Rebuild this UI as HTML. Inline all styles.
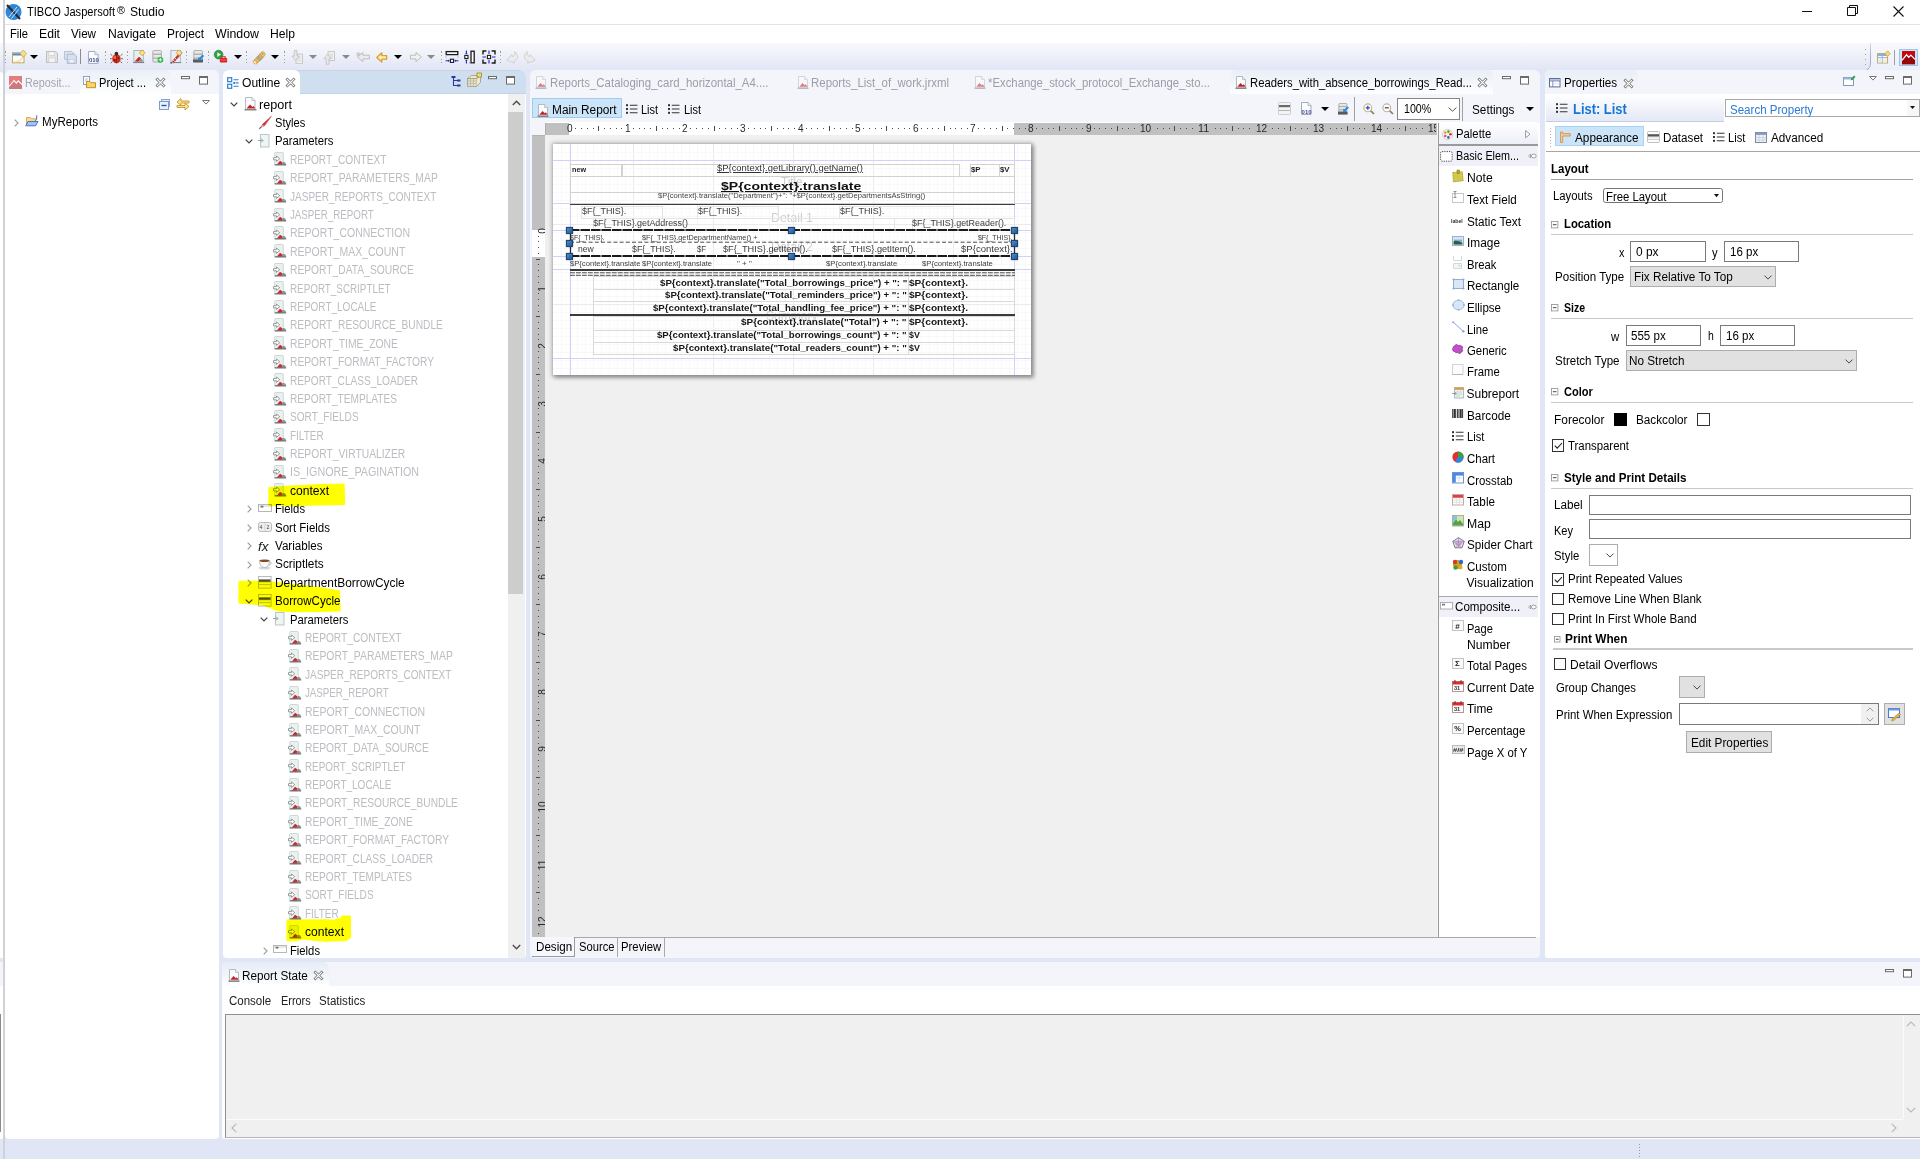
<!DOCTYPE html>
<html><head><meta charset="utf-8"><title>TIBCO Jaspersoft Studio</title><style>
html,body{margin:0;padding:0;}
body{width:1920px;height:1159px;overflow:hidden;position:relative;background:#e1e6f6;font-family:"Liberation Sans",sans-serif;font-size:12px;}
div,span.t,svg{position:absolute;}
span.t{white-space:pre;transform-origin:0 50%;}
svg{overflow:visible;}
</style></head><body>
<div style="left:0px;top:0px;width:4px;height:43px;background:#fff;"></div>
<div style="left:0px;top:43px;width:4px;height:27px;background:linear-gradient(#f8f9fd 0%,#eff1f9 45%,#e1e5f5 100%);"></div>
<div style="left:0px;top:72px;width:3px;height:1067px;background:#fff;border-radius:0 4px 2px 0;"></div>
<div style="left:5px;top:0px;width:1915px;height:24px;background:#fff;"></div>
<div style="left:5px;top:24px;width:1915px;height:1px;background:#e3e3e3;"></div>
<svg style="left:5px;top:3px;" width="18" height="18" viewBox="0 0 18 18"><circle cx="8.5" cy="9" r="8" fill="#2e86d4"/><path d="M2 2 L15 16" stroke="#2a2a3a" stroke-width="2.2"/><path d="M4 14 L12 4 M6.5 15.5 L13.5 6.5" stroke="#cfe6fa" stroke-width="1" fill="none"/></svg>
<span class="t" style="left:27px;top:4.87px;font-size:12px;line-height:14px;height:14px;color:#000;transform:scaleX(0.9228);">TIBCO Jaspersoft</span>
<span class="t" style="left:116.8px;top:4.43px;font-size:10.5px;line-height:12px;height:12px;color:#000;transform:scaleX(1.0340);">®</span>
<span class="t" style="left:129.5px;top:4.87px;font-size:12px;line-height:14px;height:14px;color:#000;transform:scaleX(1.0139);">Studio</span>
<div style="left:1802px;top:11px;width:10.2px;height:1px;background:#111;"></div>
<svg style="left:1846.5px;top:5.4px;" width="12" height="12" viewBox="0 0 12 12"><path d="M0.5 2.5 h8 v8 h-8 z M2.5 2.5 v-2 h8 v8 h-2" fill="none" stroke="#111" stroke-width="1"/></svg>
<svg style="left:1892.7px;top:5.5px;" width="12" height="12" viewBox="0 0 12 12"><path d="M0.5 0.5 L10.5 10.5 M10.5 0.5 L0.5 10.5" stroke="#111" stroke-width="1.1"/></svg>
<div style="left:5px;top:25px;width:1915px;height:18px;background:#fff;"></div>
<span class="t" style="left:10px;top:27.37px;font-size:12px;line-height:14px;height:14px;color:#000;transform:scaleX(0.9309);">File</span>
<span class="t" style="left:39px;top:27.37px;font-size:12px;line-height:14px;height:14px;color:#000;transform:scaleX(1.0156);">Edit</span>
<span class="t" style="left:71px;top:27.37px;font-size:12px;line-height:14px;height:14px;color:#000;transform:scaleX(0.9692);">View</span>
<span class="t" style="left:108px;top:27.37px;font-size:12px;line-height:14px;height:14px;color:#000;transform:scaleX(1.0134);">Navigate</span>
<span class="t" style="left:167px;top:27.37px;font-size:12px;line-height:14px;height:14px;color:#000;transform:scaleX(0.9907);">Project</span>
<span class="t" style="left:215px;top:27.37px;font-size:12px;line-height:14px;height:14px;color:#000;transform:scaleX(1.0309);">Window</span>
<span class="t" style="left:270px;top:27.37px;font-size:12px;line-height:14px;height:14px;color:#000;transform:scaleX(1.0129);">Help</span>
<div style="left:5px;top:43px;width:1915px;height:27px;background:linear-gradient(#f8f9fd 0%,#eff1f9 45%,#e1e5f5 100%);"></div>
<div style="left:5px;top:51.3px;width:1.3px;height:1.3px;background:#a59f88;"></div>
<div style="left:5px;top:54.9px;width:1.3px;height:1.3px;background:#a59f88;"></div>
<div style="left:5px;top:58.5px;width:1.3px;height:1.3px;background:#a59f88;"></div>
<div style="left:5px;top:62.099999999999994px;width:1.3px;height:1.3px;background:#a59f88;"></div>
<svg style="left:11.00px;top:49.40px;" width="16.00" height="16.00" viewBox="0 0 16 16"><rect x="1.5" y="3.8" width="11.5" height="10" fill="#fffdf4" stroke="#c2a55c"/><rect x="2" y="4.3" width="10.5" height="2.2" fill="#4a90d8"/><path d="M3 13 c5 0 8 -2 9 -6" fill="none" stroke="#f0dca0" stroke-width="1.2"/><path d="M12.3 1 L15.6 4.6 12.3 8.2 9 4.6z" fill="#f8e08a" stroke="#c8a030" stroke-width=".7"/></svg>
<svg style="left:30px;top:55px;" width="8" height="4" viewBox="0 0 8 4"><path d="M0 0 h8 l-4 4 z" fill="#000"/></svg>
<svg style="left:45.52px;top:50.92px;" width="11.96" height="11.96" viewBox="0 0 13 13"><path d="M.5 .5 h10 l2 2 v10 h-12z" fill="#e4e4e4" stroke="#b9b9b9"/><rect x="3" y="1" width="6.5" height="4" fill="#f8f8f8" stroke="#c3c3c3" stroke-width=".6"/><rect x="3" y="7.5" width="7" height="5" fill="#f2f2f2" stroke="#c3c3c3" stroke-width=".6"/></svg>
<svg style="left:63.56px;top:50.96px;" width="12.88" height="12.88" viewBox="0 0 14 14"><path d="M.5 .5 h8 l1.5 1.5 v7 h-9.5z" fill="#dfe3ec" stroke="#b3bccd"/><path d="M3.5 3.5 h8 l2 2 v8 h-10z" fill="#d8dfee" stroke="#a9b6d0"/><rect x="5.5" y="9" width="5.5" height="4" fill="#f2f4f8" stroke="#b3bccd" stroke-width=".6"/></svg>
<div style="left:80px;top:49px;width:1px;height:15px;background:#8c8c8c;"></div>
<svg style="left:88.48px;top:50.96px;" width="11.04" height="12.88" viewBox="0 0 12 14"><path d="M.5 .5 h7 l3.5 3.5 v9.5 h-10.5z" fill="#fdfdfd" stroke="#9aa3b5"/><path d="M7.5 .5 v3.5 h3.5" fill="#e8ecf5" stroke="#9aa3b5" stroke-width=".8"/><text x="1" y="12" font-size="6.5" font-weight="bold" fill="#3a4f9a" font-family="Liberation Sans">010</text></svg>
<div style="left:105px;top:51.3px;width:1.3px;height:1.3px;background:#a59f88;"></div>
<div style="left:105px;top:54.9px;width:1.3px;height:1.3px;background:#a59f88;"></div>
<div style="left:105px;top:58.5px;width:1.3px;height:1.3px;background:#a59f88;"></div>
<div style="left:105px;top:62.099999999999994px;width:1.3px;height:1.3px;background:#a59f88;"></div>
<svg style="left:109.56px;top:50.04px;" width="12.88" height="14.72" viewBox="0 0 14 16"><ellipse cx="7" cy="9.5" rx="4.6" ry="5" fill="#d82a1a"/><ellipse cx="5.6" cy="8" rx="1.6" ry="2" fill="#f47a60" opacity=".8"/><circle cx="7" cy="4" r="2" fill="#3a2a2a"/><path d="M7 5 v9.5" stroke="#5a1a10" stroke-width=".7"/><path d="M2.4 6 L.5 4.5 M2 9.5 H0 M2.6 12.5 L.8 14.2 M11.6 6 l1.9 -1.5 M12 9.5 h2 M11.4 12.5 l1.8 1.7" stroke="#3a2a2a" stroke-width=".8"/><circle cx="5" cy="11" r=".9" fill="#3a1a1a"/><circle cx="9.2" cy="9" r=".9" fill="#3a1a1a"/></svg>
<div style="left:127px;top:51.3px;width:1.3px;height:1.3px;background:#a59f88;"></div>
<div style="left:127px;top:54.9px;width:1.3px;height:1.3px;background:#a59f88;"></div>
<div style="left:127px;top:58.5px;width:1.3px;height:1.3px;background:#a59f88;"></div>
<div style="left:127px;top:62.099999999999994px;width:1.3px;height:1.3px;background:#a59f88;"></div>
<svg style="left:133.00px;top:50.40px;" width="14.00" height="14.00" viewBox="0 0 14 14"><rect x=".9" y=".5" width="9.4" height="12" fill="#e9eff0" stroke="#a4b4b6" stroke-width=".9"/><path d="M1.6 11.6 L6 6.8 8.2 8.4 5.4 11.8z" fill="#c8262c"/><path d="M8.2 8.4 l2.2 3.4 h-5z" fill="#8c8c8c"/><path d="M.2 12.6 h11" stroke="#7a8080" stroke-width="1"/><path d="M9.2 -.2 L12.2 2.8 9.2 5.8 6.2 2.8z" fill="#f4d878" stroke="#c8a030" stroke-width=".7"/><path d="M8 2.8 h2.4" stroke="#fff6c8" stroke-width=".8"/></svg>
<svg style="left:151.50px;top:50.40px;" width="14.00" height="14.00" viewBox="0 0 14 14"><rect x=".8" y=".5" width="8.6" height="11.6" rx="1" fill="#dcdcdc" stroke="#a2a2a2" stroke-width=".8"/><path d="M1 4.3 h8.2 M1 8.2 h8.2" stroke="#9a9a9a" stroke-width=".8"/><path d="M1.6 2 h7 M1.6 5.9 h7 M1.6 9.8 h7" stroke="#f2f2f2" stroke-width="1"/><circle cx="8.4" cy="9.8" r="2.9" fill="#2fb344"/><path d="M6.6 9.8 h3.6 M8.4 8 v3.6" stroke="#d8ffd8" stroke-width="1.1"/></svg>
<svg style="left:169.50px;top:50.40px;" width="14.00" height="14.00" viewBox="0 0 14 14"><rect x=".9" y=".5" width="9.4" height="12" fill="#e9eff0" stroke="#a4b4b6" stroke-width=".9"/><path d="M.2 12.6 h11" stroke="#7a8080" stroke-width="1"/><path d="M2.2 11.4 L10.6 1.6 l1.5 1.3 L3.8 12.6 1.6 13z" fill="#d03030" stroke="#9a2020" stroke-width=".4"/><path d="M3.2 10.2 l1.5 1.3 M5 8.2 l1.5 1.3" stroke="#fff" stroke-width=".8"/><path d="M1.6 13 l.7 -1.7 1.4 1.2z" fill="#e8b070"/><path d="M.6 13.4 l1.2 -.5" stroke="#2a4ad0" stroke-width="1"/><path d="M9.2 -.2 L12.2 2.8 9.2 5.8 6.2 2.8z" fill="#f4d878" stroke="#c8a030" stroke-width=".7"/><path d="M8 2.8 h2.4" stroke="#fff6c8" stroke-width=".8"/></svg>
<div style="left:186px;top:51.3px;width:1.3px;height:1.3px;background:#a59f88;"></div>
<div style="left:186px;top:54.9px;width:1.3px;height:1.3px;background:#a59f88;"></div>
<div style="left:186px;top:58.5px;width:1.3px;height:1.3px;background:#a59f88;"></div>
<div style="left:186px;top:62.099999999999994px;width:1.3px;height:1.3px;background:#a59f88;"></div>
<svg style="left:192.80px;top:50.40px;" width="14.00" height="14.00" viewBox="0 0 14 14"><rect x=".8" y=".5" width="8.6" height="11.6" rx="1" fill="#dcdcdc" stroke="#a2a2a2" stroke-width=".8"/><path d="M1 4.3 h8.2 M1 8.2 h8.2" stroke="#9a9a9a" stroke-width=".8"/><path d="M1.6 2 h7 M1.6 5.9 h7 M1.6 9.8 h7" stroke="#f2f2f2" stroke-width="1"/><rect x="0" y="9.4" width="10" height="3" fill="#5a5a5a"/><path d="M10.4 5.2 L6.4 9.2" stroke="#2a8ae0" stroke-width="2.2"/><path d="M5.2 6.8 v3.6 h3.6z" fill="#2a8ae0"/></svg>
<div style="left:208px;top:51.3px;width:1.3px;height:1.3px;background:#a59f88;"></div>
<div style="left:208px;top:54.9px;width:1.3px;height:1.3px;background:#a59f88;"></div>
<div style="left:208px;top:58.5px;width:1.3px;height:1.3px;background:#a59f88;"></div>
<div style="left:208px;top:62.099999999999994px;width:1.3px;height:1.3px;background:#a59f88;"></div>
<svg style="left:214.00px;top:50.40px;" width="14.00" height="13.00" viewBox="0 0 14 13"><circle cx="4.6" cy="4.6" r="4.4" fill="#2f9f48" stroke="#1f7f34" stroke-width=".6"/><path d="M3.3 2.2 L7 4.6 3.3 7z" fill="#eaffea"/><rect x="5.8" y="8" width="7.4" height="4.4" rx="1" fill="#d8241c"/><path d="M7.8 8 v-1.2 h3.4 v1.2" fill="none" stroke="#d8241c" stroke-width="1.1"/><path d="M6.2 10 h6.6" stroke="#f08a84" stroke-width=".7"/></svg>
<svg style="left:234px;top:55px;" width="8" height="4" viewBox="0 0 8 4"><path d="M0 0 h8 l-4 4 z" fill="#000"/></svg>
<div style="left:246px;top:51.3px;width:1.3px;height:1.3px;background:#a59f88;"></div>
<div style="left:246px;top:54.9px;width:1.3px;height:1.3px;background:#a59f88;"></div>
<div style="left:246px;top:58.5px;width:1.3px;height:1.3px;background:#a59f88;"></div>
<div style="left:246px;top:62.099999999999994px;width:1.3px;height:1.3px;background:#a59f88;"></div>
<svg style="left:251.50px;top:50.90px;" width="14.00" height="13.00" viewBox="0 0 14 13"><path d="M1.2 10.2 L7.6 3.2 l3.6 3.2 L4.6 12.8 c-1.6 .6 -3.8 -1 -3.4 -2.6z" fill="#e9b448" stroke="#b8832a" stroke-width=".6"/><path d="M7.6 3.2 l2.2 -2.4 c1.6 -.6 3.8 1.2 3.4 3 l-2 2.6z" fill="#f2c868" stroke="#b8832a" stroke-width=".6"/><path d="M4.6 6.4 l3.6 3.2 1.6 -1.6 -3.6 -3.2z" fill="#a9a9b4" stroke="#8a8a94" stroke-width=".4"/><path d="M1.4 10.6 c.4 1.4 1.6 2.2 3 2.2 l-1.2 -2.6z" fill="#fff8d8"/><circle cx="10.6" cy="3" r=".9" fill="#7aa0c8"/></svg>
<svg style="left:271px;top:55px;" width="8" height="4" viewBox="0 0 8 4"><path d="M0 0 h8 l-4 4 z" fill="#000"/></svg>
<div style="left:284px;top:51.3px;width:1.3px;height:1.3px;background:#a59f88;"></div>
<div style="left:284px;top:54.9px;width:1.3px;height:1.3px;background:#a59f88;"></div>
<div style="left:284px;top:58.5px;width:1.3px;height:1.3px;background:#a59f88;"></div>
<div style="left:284px;top:62.099999999999994px;width:1.3px;height:1.3px;background:#a59f88;"></div>
<svg style="left:290.56px;top:50.04px;" width="12.88" height="14.72" viewBox="0 0 14 16"><rect x="5.5" y="4.5" width="7" height="10" fill="#f1f1f1" stroke="#c4c4c4"/><path d="M7 7.5 h4 M7 9.5 h4 M7 11.5 h4" stroke="#cfcfcf" stroke-width=".8"/><path d="M3.5 .5 h3 v6 h2.5 l-4 5 -4 -5 h2.5z" fill="#e9e9e9" stroke="#b9b9b9" stroke-width=".8"/></svg>
<svg style="left:309px;top:55px;" width="8" height="4" viewBox="0 0 8 4"><path d="M0 0 h8 l-4 4 z" fill="#8a8a8a"/></svg>
<svg style="left:322.56px;top:50.04px;" width="12.88" height="14.72" viewBox="0 0 14 16"><rect x="5.5" y="1.5" width="7" height="10" fill="#f1f1f1" stroke="#c4c4c4"/><path d="M7 4.5 h4 M7 6.5 h4 M7 8.5 h4" stroke="#cfcfcf" stroke-width=".8"/><path d="M3.5 15.5 h3 v-6 h2.5 l-4 -5 -4 5 h2.5z" fill="#e9e9e9" stroke="#b9b9b9" stroke-width=".8"/></svg>
<svg style="left:342px;top:55px;" width="8" height="4" viewBox="0 0 8 4"><path d="M0 0 h8 l-4 4 z" fill="#8a8a8a"/></svg>
<svg style="left:355.60px;top:51.88px;" width="13.80" height="11.04" viewBox="0 0 15 12"><path d="M14.5 3.5 h-7 v-3 l-6 5 6 5 v-3 h7z" fill="#ececec" stroke="#b5b5b5" stroke-width=".9"/><path d="M2.5 0 l.7 1.5 1.6 .2 -1.2 1.1 .3 1.6 -1.4 -.8 -1.4 .8 .3 -1.6 -1.2 -1.1 1.6 -.2z" fill="#d4d4d4" stroke="#aaa" stroke-width=".4"/></svg>
<svg style="left:376.00px;top:51.70px;" width="12.00" height="11.00" viewBox="0 0 12 11"><path d="M10.6 3.6 h-4.8 v-2.8 l-5 4.6 5 4.6 v-2.8 h4.8z" fill="#fdeebc" stroke="#d9a030" stroke-width="1.3" stroke-linejoin="round"/></svg>
<svg style="left:394px;top:55px;" width="8" height="4" viewBox="0 0 8 4"><path d="M0 0 h8 l-4 4 z" fill="#000"/></svg>
<svg style="left:409.52px;top:51.88px;" width="11.96" height="11.04" viewBox="0 0 13 12"><path d="M.5 3.5 h6 v-3 l6 5 -6 5 v-3 h-6z" fill="#f1f1f1" stroke="#b9b9b9" stroke-width="1"/></svg>
<svg style="left:427px;top:55px;" width="8" height="4" viewBox="0 0 8 4"><path d="M0 0 h8 l-4 4 z" fill="#8a8a8a"/></svg>
<div style="left:441px;top:51.3px;width:1.3px;height:1.3px;background:#a59f88;"></div>
<div style="left:441px;top:54.9px;width:1.3px;height:1.3px;background:#a59f88;"></div>
<div style="left:441px;top:58.5px;width:1.3px;height:1.3px;background:#a59f88;"></div>
<div style="left:441px;top:62.099999999999994px;width:1.3px;height:1.3px;background:#a59f88;"></div>
<svg style="left:445.00px;top:50.40px;" width="14.00" height="14.00" viewBox="0 0 14 14"><rect x="1.2" y="1.6" width="11.6" height="3" fill="#fff" stroke="#1a1a1a" stroke-width="1.3"/><path d="M1 6.4 v2.2 M13 6.4 v2.2" stroke="#888" stroke-width=".8" stroke-dasharray="1 1"/><path d="M.6 10.8 h3.4 M10 10.8 h3.4" stroke="#1a2ac8" stroke-width="1.1"/><path d="M3.2 9.6 l1.6 1.2 -1.6 1.2z M10.8 9.6 l-1.6 1.2 1.6 1.2z" fill="#1a2ac8"/><rect x="5.4" y="9.2" width="3.2" height="3.2" fill="#fff" stroke="#1a1a1a" stroke-width="1.1"/></svg>
<svg style="left:464.00px;top:50.40px;" width="12.00" height="14.00" viewBox="0 0 12 14"><rect x="7" y="1.2" width="3.2" height="11.6" fill="#fff" stroke="#1a1a1a" stroke-width="1.3"/><path d="M2.4 .6 v3.2 M2.4 10.2 v3.2" stroke="#1a2ac8" stroke-width="1.1"/><path d="M1.2 3 l1.2 1.6 1.2 -1.6z M1.2 11 l1.2 -1.6 1.2 1.6z" fill="#1a2ac8"/><rect x=".8" y="5.4" width="3.2" height="3.2" fill="#fff" stroke="#1a1a1a" stroke-width="1.1"/><path d="M5 12.8 h2" stroke="#888" stroke-width=".8"/></svg>
<svg style="left:482.00px;top:50.40px;" width="14.00" height="14.00" viewBox="0 0 14 14"><path d="M1 4.4 V1 H4.4 M9.6 1 H13 V4.4 M13 9.6 V13 H9.6 M4.4 13 H1 V9.6" fill="none" stroke="#1a1a1a" stroke-width="1.4"/><path d="M7 .4 v3.6 M7 10 v3.6 M.4 7 h3.6 M10 7 h3.6" stroke="#1a2ac8" stroke-width="1.1"/><rect x="5.4" y="5.4" width="3.2" height="3.2" fill="#fff" stroke="#1a1a1a" stroke-width="1.1"/></svg>
<div style="left:500px;top:51.3px;width:1.3px;height:1.3px;background:#a59f88;"></div>
<div style="left:500px;top:54.9px;width:1.3px;height:1.3px;background:#a59f88;"></div>
<div style="left:500px;top:58.5px;width:1.3px;height:1.3px;background:#a59f88;"></div>
<div style="left:500px;top:62.099999999999994px;width:1.3px;height:1.3px;background:#a59f88;"></div>
<svg style="left:505.50px;top:50.90px;" width="13.00" height="12.50" viewBox="0 0 13 12.5"><path d="M8.6 .6 c4.2 2.4 4.2 8.2 -.8 9.6 l.6 2 -7.6 -3 5 -5.6 .6 2.2 c2.4 -.8 3 -3.4 2.2 -5.2z" fill="#ececec" stroke="#c9c9c9" stroke-width=".8"/></svg>
<svg style="left:522.50px;top:50.90px;" width="13.00" height="12.50" viewBox="0 0 13 12.5"><path d="M4.4 .6 c-4.2 2.4 -4.2 8.2 .8 9.6 l-.6 2 7.6 -3 -5 -5.6 -.6 2.2 c-2.4 -.8 -3 -3.4 -2.2 -5.2z" fill="#ececec" stroke="#c9c9c9" stroke-width=".8"/></svg>
<svg style="left:1864px;top:43px" width="56" height="27" viewBox="0 0 56 27"><defs><linearGradient id="pg" x1="0" y1="0" x2="0" y2="1"><stop offset="0" stop-color="#f8f9fd"/><stop offset="1" stop-color="#eceff9"/></linearGradient><linearGradient id="pl" x1="0" y1="0" x2="0" y2="1"><stop offset="0" stop-color="#d5d9e8"/><stop offset=".5" stop-color="#a9b0c8"/><stop offset="1" stop-color="#a0a8c2"/></linearGradient></defs><path d="M6.5 0 V20 C6.5 24 5 26 2.5 27 H56 V0z" fill="url(#pg)"/><path d="M6.5 0 V20 C6.5 24 5 26 2.5 27" fill="none" stroke="url(#pl)" stroke-width="1"/></svg>
<div style="left:1865.2px;top:49px;width:1.3px;height:1.3px;background:#a59f88;"></div>
<div style="left:1865.2px;top:54px;width:1.3px;height:1.3px;background:#a59f88;"></div>
<div style="left:1865.2px;top:59px;width:1.3px;height:1.3px;background:#a59f88;"></div>
<div style="left:1865.2px;top:64px;width:1.3px;height:1.3px;background:#a59f88;"></div>
<svg style="left:1876.50px;top:51.40px;" width="14.00" height="13.00" viewBox="0 0 14 13"><rect x=".6" y="2.6" width="10" height="9.4" fill="#fff" stroke="#b0a070" stroke-width=".9"/><path d="M.6 6.6 h10 M5.2 2.6 v9.4" stroke="#9aa6b8" stroke-width=".9"/><rect x="1" y="3" width="9.2" height="2" fill="#8ab0e0"/><rect x="1.4" y="7.4" width="3.2" height="4" fill="#dfe9f8"/><rect x="6" y="7.4" width="4" height="4" fill="#f8f0d0"/><path d="M10.6 -.2 L13.4 2.6 10.6 5.4 7.8 2.6z" fill="#f4d878" stroke="#c8a030" stroke-width=".7"/></svg>
<div style="left:1894px;top:50px;width:1px;height:15px;background:#a0a0a0;"></div>
<div style="left:1899px;top:48.6px;width:19px;height:17.4px;background:#cce4f7;border:1px solid #9ac6ea;box-sizing:border-box;"></div>
<svg style="left:1902.30px;top:51.20px;" width="13.00" height="13.20" viewBox="0 0 13 13.2"><rect width="13" height="13.2" fill="#c40a10"/><path d="M0 9.4 L4.6 3.8 6.8 6.4 8.8 4.2 13 8.4 V13.2 H0z" fill="#98060a"/><path d="M0 9.4 L4.6 3.8 6.8 6.4 8.8 4.2 13 8.4" fill="none" stroke="#fff" stroke-width="1.2"/></svg>
<div style="left:5px;top:70px;width:214px;height:1069px;background:#fff;border-radius:6px 6px 4px 4px;"></div>
<div style="left:5px;top:70px;width:214px;height:24px;background:#f4f5fb;border-radius:6px 6px 0 0;"></div>
<svg style="left:9px;top:76px;" width="13" height="13" viewBox="0 0 13 13"><rect width="13" height="13" fill="#e27c7e"/><path d="M0 10.5 L5 4.5 7.3 7.2 9.3 4.8 13 8.6 V13 H0z" fill="#cb7a7c"/><path d="M0 10.5 L5 4.5 7.3 7.2 9.3 4.8 13 8.6" fill="none" stroke="#fff" stroke-width="1.1"/></svg>
<span class="t" style="left:25px;top:76.17px;font-size:12px;line-height:14px;height:14px;color:#a4a6b4;transform:scaleX(0.8976);">Reposit...</span>
<div style="left:80px;top:70px;width:91px;height:24px;background:linear-gradient(#eaf0f7 0%,#f4f7fb 55%,#ffffff 100%);border-radius:5px 5px 0 0;"></div>
<svg style="left:83px;top:76px;" width="13" height="12" viewBox="0 0 13 12"><rect x=".5" y=".5" width="6" height="8" fill="#fff" stroke="#8d97a8" stroke-width=".9"/><path d="M2 3 h3 M2 5 h3" stroke="#9ab" stroke-width=".7"/><path d="M3.5 5.5 h3.5 l1 1.2 h4.5 v5 h-9z" fill="#f8d56a" stroke="#b98a1c" stroke-width=".9"/></svg>
<span class="t" style="left:99px;top:76.17px;font-size:12px;line-height:14px;height:14px;color:#000;transform:scaleX(0.9273);">Project ...</span>
<svg style="left:155.5px;top:78px;" width="9" height="9" viewBox="0 0 9 9"><path d="M1.4 1.4 L7.6 7.6 M7.6 1.4 L1.4 7.6" stroke="#6f6f6f" stroke-width="2.7" stroke-linecap="square"/><path d="M1.4 1.4 L7.6 7.6 M7.6 1.4 L1.4 7.6" stroke="#fff" stroke-width="1.1" stroke-linecap="square"/></svg>
<svg style="left:181px;top:76.2px;" width="9" height="3.2" viewBox="0 0 9 3.2"><rect x=".5" y=".5" width="8" height="2.2" fill="#fff" stroke="#6a6a6a" stroke-width="1"/></svg>
<svg style="left:199px;top:75.8px;" width="9" height="8.6" viewBox="0 0 9 8.6"><rect x=".5" y=".5" width="8" height="7.6" fill="#fff" stroke="#6a6a6a" stroke-width="1"/><rect x="0" y="0" width="9" height="2" fill="#6a6a6a"/></svg>
<svg style="left:159px;top:99px;" width="12" height="11" viewBox="0 0 12 11"><rect x="2.5" y=".5" width="8" height="7" fill="#dfe9f8" stroke="#7f9fd0" stroke-width=".9"/><rect x=".5" y="2.5" width="9" height="8" fill="#eaf1fb" stroke="#6f93cc" stroke-width=".9"/><path d="M2.5 6.5 h5" stroke="#2a56a8" stroke-width="1.4"/></svg>
<svg style="left:176px;top:98px;" width="14" height="12" viewBox="0 0 14 12"><path d="M13 3.5 h-8 v-2.5 l-4 3.5 4 3.5 v-2.5 h8z" fill="#f9e3a0" stroke="#c8941e" stroke-width=".9" transform="translate(0,-.5)"/><path d="M1 8.5 h8 v-2.5 l4 3.5 -4 3.5 v-2.5 h-8z" fill="#f9e3a0" stroke="#c8941e" stroke-width=".9" transform="translate(0,-1)"/></svg>
<svg style="left:202px;top:100px;" width="8" height="5" viewBox="0 0 8 5"><path d="M.6 .5 h6.8 l-3.4 3.6z" fill="#fff" stroke="#6a6a6a" stroke-width=".9"/></svg>
<svg style="left:14px;top:118.5px;" width="5" height="8" viewBox="0 0 5 8"><path d="M.7 .7 L4 4 .7 7.3" fill="none" stroke="#9a9a9a" stroke-width="1.1"/></svg>
<svg style="left:25px;top:115px;" width="14" height="12" viewBox="0 0 14 12"><path d="M1.5 2.5 h4 l1 1.2 h4 v6 h-9z" fill="#f7dc8c" stroke="#c8a040" stroke-width=".8"/><path d="M.8 10.8 l2.2 -4.3 h10 l-2.4 4.3z" fill="#9cc4f4" stroke="#4a62c0" stroke-width=".9"/><path d="M11.7 .3 v4.2 l-1.4 1.2" stroke="#3f69b8" stroke-width="1" fill="none"/></svg>
<span class="t" style="left:42px;top:115.17px;font-size:12px;line-height:14px;height:14px;color:#000;transform:scaleX(0.9653);">MyReports</span>
<div style="left:222.5px;top:70px;width:303.5px;height:887.5px;background:#fff;border-radius:6px 6px 4px 4px;"></div>
<div style="left:222.5px;top:70px;width:303.5px;height:24px;background:#cfdff0;border-radius:6px 6px 0 0;"></div>
<div style="left:228px;top:70px;width:292px;height:1px;background:#cdd5e2;"></div>
<div style="left:222.5px;top:93px;width:303.5px;height:1px;background:#c3d3e8;"></div>
<div style="left:222.5px;top:70px;width:77.5px;height:24px;background:#fff;border-radius:6px 6px 0 0;"></div>
<svg style="left:227px;top:77px;" width="12" height="12" viewBox="0 0 12 12"><rect x=".7" y=".7" width="4" height="4" fill="#fff" stroke="#2f7fd0" stroke-width="1.2"/><rect x=".7" y="7.3" width="4" height="4" fill="#fff" stroke="#2f7fd0" stroke-width="1.2"/><path d="M6.5 2.7 h5 M9 5.9 h2.5 M6.5 9.3 h5" stroke="#2f7fd0" stroke-width="1.1"/><rect x="6.3" y="5" width="2" height="2" fill="#2f7fd0"/></svg>
<span class="t" style="left:242px;top:75.97px;font-size:12px;line-height:14px;height:14px;color:#000;transform:scaleX(1.0073);">Outline</span>
<svg style="left:286px;top:78px;" width="9" height="9" viewBox="0 0 9 9"><path d="M1.4 1.4 L7.6 7.6 M7.6 1.4 L1.4 7.6" stroke="#6f6f6f" stroke-width="2.7" stroke-linecap="square"/><path d="M1.4 1.4 L7.6 7.6 M7.6 1.4 L1.4 7.6" stroke="#fff" stroke-width="1.1" stroke-linecap="square"/></svg>
<svg style="left:451px;top:76px;" width="10" height="12" viewBox="0 0 10 12"><path d="M2.5 .5 v9 h5 M2.5 4.5 h5" fill="none" stroke="#2a3a9a" stroke-width="1.1"/><rect x="0.5" y="0" width="4" height="2" fill="#2a3a9a"/><rect x="6" y="3.5" width="3.5" height="2" fill="#2a3a9a"/><rect x="6" y="8.5" width="3.5" height="2" fill="#2a3a9a"/></svg>
<svg style="left:467px;top:73px;" width="15" height="15" viewBox="0 0 15 15"><path d="M.5 5.5 L9.5 5.5 9.5 13.5 .5 13.5z" fill="#e4e0c8" stroke="#9a9a86" stroke-width=".8"/><path d="M.5 5.5 l4 -3 h9 l-4 3z M9.5 5.5 l4 -3 v7 l-4 4" fill="#efe9c4" stroke="#9a9a86" stroke-width=".8"/><path d="M.5 8 h9 M.5 10.5 h9 M3.5 5.5 v8 M6.5 5.5 v8" stroke="#b0b09a" stroke-width=".6"/><rect x="10" y="0" width="4.5" height="4" fill="#f4e06a" stroke="#8a7a2a" stroke-width=".7"/></svg>
<svg style="left:488px;top:76.2px;" width="9" height="3.2" viewBox="0 0 9 3.2"><rect x=".5" y=".5" width="8" height="2.2" fill="#fff" stroke="#6a6a6a" stroke-width="1"/></svg>
<svg style="left:506px;top:75.8px;" width="9" height="8.6" viewBox="0 0 9 8.6"><rect x=".5" y=".5" width="8" height="7.6" fill="#fff" stroke="#6a6a6a" stroke-width="1"/><rect x="0" y="0" width="9" height="2" fill="#6a6a6a"/></svg>
<div style="left:508px;top:94px;width:16.5px;height:863.5px;background:#f0f0f0;"></div>
<svg style="left:512px;top:100px;" width="9" height="6" viewBox="0 0 9 6"><path d="M.8 5 L4.5 1.3 8.2 5" fill="none" stroke="#505050" stroke-width="1.5"/></svg>
<svg style="left:512px;top:944px;" width="9" height="6" viewBox="0 0 9 6"><path d="M.8 1 L4.5 4.7 8.2 1" fill="none" stroke="#505050" stroke-width="1.5"/></svg>
<div style="left:508.3px;top:112.3px;width:15.2px;height:481.7px;background:#cdcdcd;"></div>
<svg style="left:229.5px;top:102.3px;" width="8" height="5" viewBox="0 0 8 5"><path d="M.7 .7 L4 4 7.3 .7" fill="none" stroke="#404040" stroke-width="1.2"/></svg>
<svg style="left:243.5px;top:97.0px;" width="13" height="14" viewBox="0 0 13 14"><path d="M1.5 .5 h6.5 l3 3 v9 h-9.5z" fill="#fbfcfd" stroke="#a9b2bd" stroke-width=".9"/><path d="M8 .5 v3 h3" fill="#e6ebf0" stroke="#a9b2bd" stroke-width=".7"/><path d="M2.5 11.5 l3.5 -4 2.5 2.5 1 -1 2 2.5z" fill="#c8202a"/><path d="M.5 12.8 h12" stroke="#7a7a7a" stroke-width="1.3"/></svg>
<span class="t" style="left:259px;top:97.67px;font-size:12px;line-height:14px;height:14px;color:#000;transform:scaleX(1.0527);">report</span>
<svg style="left:257.5px;top:115.69px;" width="14" height="14" viewBox="0 0 14 14"><path d="M13.2 .4 L4.6 8.2 3.4 10.8 6.2 10z" fill="#d03038" stroke="#a81e24" stroke-width=".5"/><path d="M13.2 .4 L6.2 10" stroke="#e8686c" stroke-width=".8"/><path d="M4.4 8.6 l1.8 1.5 -2.6 1.3z" fill="#e8b478"/><path d="M.4 13.4 l3.4 -1.7 -1.3 -1.1z" fill="#3a5ad0"/></svg>
<span class="t" style="left:274.5px;top:116.06px;font-size:12px;line-height:14px;height:14px;color:#000;transform:scaleX(0.9242);">Styles</span>
<svg style="left:244.5px;top:139.07999999999998px;" width="8" height="5" viewBox="0 0 8 5"><path d="M.7 .7 L4 4 7.3 .7" fill="none" stroke="#404040" stroke-width="1.2"/></svg>
<svg style="left:257.5px;top:133.77999999999997px;" width="12" height="14" viewBox="0 0 12 14"><rect x="2.5" y=".5" width="8.5" height="12.5" fill="#eef5f3" stroke="#b4c2c0" stroke-width=".9"/><path d="M0 6.5 h4.5 M3 4.5 l2 2 -2 2" fill="none" stroke="#8aa09c" stroke-width=".9"/></svg>
<span class="t" style="left:274.5px;top:134.45px;font-size:12px;line-height:14px;height:14px;color:#000;transform:scaleX(0.9400);">Parameters</span>
<svg style="left:272.5px;top:152.47px;" width="14" height="14" viewBox="0 0 14 14"><rect x="1.7" y=".5" width="8.6" height="12.2" rx=".8" fill="#eaf1ef" stroke="#c3cfcc" stroke-width=".8"/><path d="M.5 5.6 h3 v-1.6 l3.2 2.7 -3.2 2.7 v-1.6 h-3z" fill="#fff" stroke="#7d8886" stroke-width=".8" stroke-linejoin="round"/><path d="M3.9 12.6 L7 8.8 9.6 10.6 8.6 12.6z" fill="#cc2a30"/><path d="M9.6 10.6 c1.6 -1.2 3.2 0 3.4 2 h-4.6z" fill="#8f8f8f"/><path d="M1.6 12.9 h11.6" stroke="#555" stroke-width="1"/></svg>
<span class="t" style="left:289.7px;top:152.84px;font-size:12px;line-height:14px;height:14px;color:#bbbdc2;transform:scaleX(0.8480);">REPORT_CONTEXT</span>
<svg style="left:272.5px;top:170.86px;" width="14" height="14" viewBox="0 0 14 14"><rect x="1.7" y=".5" width="8.6" height="12.2" rx=".8" fill="#eaf1ef" stroke="#c3cfcc" stroke-width=".8"/><path d="M.5 5.6 h3 v-1.6 l3.2 2.7 -3.2 2.7 v-1.6 h-3z" fill="#fff" stroke="#7d8886" stroke-width=".8" stroke-linejoin="round"/><path d="M3.9 12.6 L7 8.8 9.6 10.6 8.6 12.6z" fill="#cc2a30"/><path d="M9.6 10.6 c1.6 -1.2 3.2 0 3.4 2 h-4.6z" fill="#8f8f8f"/><path d="M1.6 12.9 h11.6" stroke="#555" stroke-width="1"/></svg>
<span class="t" style="left:289.7px;top:171.23px;font-size:12px;line-height:14px;height:14px;color:#bbbdc2;transform:scaleX(0.8647);">REPORT_PARAMETERS_MAP</span>
<svg style="left:272.5px;top:189.25px;" width="14" height="14" viewBox="0 0 14 14"><rect x="1.7" y=".5" width="8.6" height="12.2" rx=".8" fill="#eaf1ef" stroke="#c3cfcc" stroke-width=".8"/><path d="M.5 5.6 h3 v-1.6 l3.2 2.7 -3.2 2.7 v-1.6 h-3z" fill="#fff" stroke="#7d8886" stroke-width=".8" stroke-linejoin="round"/><path d="M3.9 12.6 L7 8.8 9.6 10.6 8.6 12.6z" fill="#cc2a30"/><path d="M9.6 10.6 c1.6 -1.2 3.2 0 3.4 2 h-4.6z" fill="#8f8f8f"/><path d="M1.6 12.9 h11.6" stroke="#555" stroke-width="1"/></svg>
<span class="t" style="left:289.7px;top:189.62px;font-size:12px;line-height:14px;height:14px;color:#bbbdc2;transform:scaleX(0.8352);">JASPER_REPORTS_CONTEXT</span>
<svg style="left:272.5px;top:207.64px;" width="14" height="14" viewBox="0 0 14 14"><rect x="1.7" y=".5" width="8.6" height="12.2" rx=".8" fill="#eaf1ef" stroke="#c3cfcc" stroke-width=".8"/><path d="M.5 5.6 h3 v-1.6 l3.2 2.7 -3.2 2.7 v-1.6 h-3z" fill="#fff" stroke="#7d8886" stroke-width=".8" stroke-linejoin="round"/><path d="M3.9 12.6 L7 8.8 9.6 10.6 8.6 12.6z" fill="#cc2a30"/><path d="M9.6 10.6 c1.6 -1.2 3.2 0 3.4 2 h-4.6z" fill="#8f8f8f"/><path d="M1.6 12.9 h11.6" stroke="#555" stroke-width="1"/></svg>
<span class="t" style="left:289.7px;top:208.01px;font-size:12px;line-height:14px;height:14px;color:#bbbdc2;transform:scaleX(0.8115);">JASPER_REPORT</span>
<svg style="left:272.5px;top:226.03000000000003px;" width="14" height="14" viewBox="0 0 14 14"><rect x="1.7" y=".5" width="8.6" height="12.2" rx=".8" fill="#eaf1ef" stroke="#c3cfcc" stroke-width=".8"/><path d="M.5 5.6 h3 v-1.6 l3.2 2.7 -3.2 2.7 v-1.6 h-3z" fill="#fff" stroke="#7d8886" stroke-width=".8" stroke-linejoin="round"/><path d="M3.9 12.6 L7 8.8 9.6 10.6 8.6 12.6z" fill="#cc2a30"/><path d="M9.6 10.6 c1.6 -1.2 3.2 0 3.4 2 h-4.6z" fill="#8f8f8f"/><path d="M1.6 12.9 h11.6" stroke="#555" stroke-width="1"/></svg>
<span class="t" style="left:289.7px;top:226.40px;font-size:12px;line-height:14px;height:14px;color:#bbbdc2;transform:scaleX(0.8751);">REPORT_CONNECTION</span>
<svg style="left:272.5px;top:244.42000000000002px;" width="14" height="14" viewBox="0 0 14 14"><rect x="1.7" y=".5" width="8.6" height="12.2" rx=".8" fill="#eaf1ef" stroke="#c3cfcc" stroke-width=".8"/><path d="M.5 5.6 h3 v-1.6 l3.2 2.7 -3.2 2.7 v-1.6 h-3z" fill="#fff" stroke="#7d8886" stroke-width=".8" stroke-linejoin="round"/><path d="M3.9 12.6 L7 8.8 9.6 10.6 8.6 12.6z" fill="#cc2a30"/><path d="M9.6 10.6 c1.6 -1.2 3.2 0 3.4 2 h-4.6z" fill="#8f8f8f"/><path d="M1.6 12.9 h11.6" stroke="#555" stroke-width="1"/></svg>
<span class="t" style="left:289.7px;top:244.79px;font-size:12px;line-height:14px;height:14px;color:#bbbdc2;transform:scaleX(0.8748);">REPORT_MAX_COUNT</span>
<svg style="left:272.5px;top:262.81px;" width="14" height="14" viewBox="0 0 14 14"><rect x="1.7" y=".5" width="8.6" height="12.2" rx=".8" fill="#eaf1ef" stroke="#c3cfcc" stroke-width=".8"/><path d="M.5 5.6 h3 v-1.6 l3.2 2.7 -3.2 2.7 v-1.6 h-3z" fill="#fff" stroke="#7d8886" stroke-width=".8" stroke-linejoin="round"/><path d="M3.9 12.6 L7 8.8 9.6 10.6 8.6 12.6z" fill="#cc2a30"/><path d="M9.6 10.6 c1.6 -1.2 3.2 0 3.4 2 h-4.6z" fill="#8f8f8f"/><path d="M1.6 12.9 h11.6" stroke="#555" stroke-width="1"/></svg>
<span class="t" style="left:289.7px;top:263.18px;font-size:12px;line-height:14px;height:14px;color:#bbbdc2;transform:scaleX(0.8556);">REPORT_DATA_SOURCE</span>
<svg style="left:272.5px;top:281.2px;" width="14" height="14" viewBox="0 0 14 14"><rect x="1.7" y=".5" width="8.6" height="12.2" rx=".8" fill="#eaf1ef" stroke="#c3cfcc" stroke-width=".8"/><path d="M.5 5.6 h3 v-1.6 l3.2 2.7 -3.2 2.7 v-1.6 h-3z" fill="#fff" stroke="#7d8886" stroke-width=".8" stroke-linejoin="round"/><path d="M3.9 12.6 L7 8.8 9.6 10.6 8.6 12.6z" fill="#cc2a30"/><path d="M9.6 10.6 c1.6 -1.2 3.2 0 3.4 2 h-4.6z" fill="#8f8f8f"/><path d="M1.6 12.9 h11.6" stroke="#555" stroke-width="1"/></svg>
<span class="t" style="left:289.7px;top:281.57px;font-size:12px;line-height:14px;height:14px;color:#bbbdc2;transform:scaleX(0.8206);">REPORT_SCRIPTLET</span>
<svg style="left:272.5px;top:299.59000000000003px;" width="14" height="14" viewBox="0 0 14 14"><rect x="1.7" y=".5" width="8.6" height="12.2" rx=".8" fill="#eaf1ef" stroke="#c3cfcc" stroke-width=".8"/><path d="M.5 5.6 h3 v-1.6 l3.2 2.7 -3.2 2.7 v-1.6 h-3z" fill="#fff" stroke="#7d8886" stroke-width=".8" stroke-linejoin="round"/><path d="M3.9 12.6 L7 8.8 9.6 10.6 8.6 12.6z" fill="#cc2a30"/><path d="M9.6 10.6 c1.6 -1.2 3.2 0 3.4 2 h-4.6z" fill="#8f8f8f"/><path d="M1.6 12.9 h11.6" stroke="#555" stroke-width="1"/></svg>
<span class="t" style="left:289.7px;top:299.96px;font-size:12px;line-height:14px;height:14px;color:#bbbdc2;transform:scaleX(0.8332);">REPORT_LOCALE</span>
<svg style="left:272.5px;top:317.98px;" width="14" height="14" viewBox="0 0 14 14"><rect x="1.7" y=".5" width="8.6" height="12.2" rx=".8" fill="#eaf1ef" stroke="#c3cfcc" stroke-width=".8"/><path d="M.5 5.6 h3 v-1.6 l3.2 2.7 -3.2 2.7 v-1.6 h-3z" fill="#fff" stroke="#7d8886" stroke-width=".8" stroke-linejoin="round"/><path d="M3.9 12.6 L7 8.8 9.6 10.6 8.6 12.6z" fill="#cc2a30"/><path d="M9.6 10.6 c1.6 -1.2 3.2 0 3.4 2 h-4.6z" fill="#8f8f8f"/><path d="M1.6 12.9 h11.6" stroke="#555" stroke-width="1"/></svg>
<span class="t" style="left:289.7px;top:318.35px;font-size:12px;line-height:14px;height:14px;color:#bbbdc2;transform:scaleX(0.8503);">REPORT_RESOURCE_BUNDLE</span>
<svg style="left:272.5px;top:336.37px;" width="14" height="14" viewBox="0 0 14 14"><rect x="1.7" y=".5" width="8.6" height="12.2" rx=".8" fill="#eaf1ef" stroke="#c3cfcc" stroke-width=".8"/><path d="M.5 5.6 h3 v-1.6 l3.2 2.7 -3.2 2.7 v-1.6 h-3z" fill="#fff" stroke="#7d8886" stroke-width=".8" stroke-linejoin="round"/><path d="M3.9 12.6 L7 8.8 9.6 10.6 8.6 12.6z" fill="#cc2a30"/><path d="M9.6 10.6 c1.6 -1.2 3.2 0 3.4 2 h-4.6z" fill="#8f8f8f"/><path d="M1.6 12.9 h11.6" stroke="#555" stroke-width="1"/></svg>
<span class="t" style="left:289.7px;top:336.74px;font-size:12px;line-height:14px;height:14px;color:#bbbdc2;transform:scaleX(0.8623);">REPORT_TIME_ZONE</span>
<svg style="left:272.5px;top:354.76000000000005px;" width="14" height="14" viewBox="0 0 14 14"><rect x="1.7" y=".5" width="8.6" height="12.2" rx=".8" fill="#eaf1ef" stroke="#c3cfcc" stroke-width=".8"/><path d="M.5 5.6 h3 v-1.6 l3.2 2.7 -3.2 2.7 v-1.6 h-3z" fill="#fff" stroke="#7d8886" stroke-width=".8" stroke-linejoin="round"/><path d="M3.9 12.6 L7 8.8 9.6 10.6 8.6 12.6z" fill="#cc2a30"/><path d="M9.6 10.6 c1.6 -1.2 3.2 0 3.4 2 h-4.6z" fill="#8f8f8f"/><path d="M1.6 12.9 h11.6" stroke="#555" stroke-width="1"/></svg>
<span class="t" style="left:289.7px;top:355.13px;font-size:12px;line-height:14px;height:14px;color:#bbbdc2;transform:scaleX(0.8513);">REPORT_FORMAT_FACTORY</span>
<svg style="left:272.5px;top:373.15000000000003px;" width="14" height="14" viewBox="0 0 14 14"><rect x="1.7" y=".5" width="8.6" height="12.2" rx=".8" fill="#eaf1ef" stroke="#c3cfcc" stroke-width=".8"/><path d="M.5 5.6 h3 v-1.6 l3.2 2.7 -3.2 2.7 v-1.6 h-3z" fill="#fff" stroke="#7d8886" stroke-width=".8" stroke-linejoin="round"/><path d="M3.9 12.6 L7 8.8 9.6 10.6 8.6 12.6z" fill="#cc2a30"/><path d="M9.6 10.6 c1.6 -1.2 3.2 0 3.4 2 h-4.6z" fill="#8f8f8f"/><path d="M1.6 12.9 h11.6" stroke="#555" stroke-width="1"/></svg>
<span class="t" style="left:289.7px;top:373.52px;font-size:12px;line-height:14px;height:14px;color:#bbbdc2;transform:scaleX(0.8430);">REPORT_CLASS_LOADER</span>
<svg style="left:272.5px;top:391.54px;" width="14" height="14" viewBox="0 0 14 14"><rect x="1.7" y=".5" width="8.6" height="12.2" rx=".8" fill="#eaf1ef" stroke="#c3cfcc" stroke-width=".8"/><path d="M.5 5.6 h3 v-1.6 l3.2 2.7 -3.2 2.7 v-1.6 h-3z" fill="#fff" stroke="#7d8886" stroke-width=".8" stroke-linejoin="round"/><path d="M3.9 12.6 L7 8.8 9.6 10.6 8.6 12.6z" fill="#cc2a30"/><path d="M9.6 10.6 c1.6 -1.2 3.2 0 3.4 2 h-4.6z" fill="#8f8f8f"/><path d="M1.6 12.9 h11.6" stroke="#555" stroke-width="1"/></svg>
<span class="t" style="left:289.7px;top:391.91px;font-size:12px;line-height:14px;height:14px;color:#bbbdc2;transform:scaleX(0.8430);">REPORT_TEMPLATES</span>
<svg style="left:272.5px;top:409.93px;" width="14" height="14" viewBox="0 0 14 14"><rect x="1.7" y=".5" width="8.6" height="12.2" rx=".8" fill="#eaf1ef" stroke="#c3cfcc" stroke-width=".8"/><path d="M.5 5.6 h3 v-1.6 l3.2 2.7 -3.2 2.7 v-1.6 h-3z" fill="#fff" stroke="#7d8886" stroke-width=".8" stroke-linejoin="round"/><path d="M3.9 12.6 L7 8.8 9.6 10.6 8.6 12.6z" fill="#cc2a30"/><path d="M9.6 10.6 c1.6 -1.2 3.2 0 3.4 2 h-4.6z" fill="#8f8f8f"/><path d="M1.6 12.9 h11.6" stroke="#555" stroke-width="1"/></svg>
<span class="t" style="left:289.7px;top:410.30px;font-size:12px;line-height:14px;height:14px;color:#bbbdc2;transform:scaleX(0.8386);">SORT_FIELDS</span>
<svg style="left:272.5px;top:428.32px;" width="14" height="14" viewBox="0 0 14 14"><rect x="1.7" y=".5" width="8.6" height="12.2" rx=".8" fill="#eaf1ef" stroke="#c3cfcc" stroke-width=".8"/><path d="M.5 5.6 h3 v-1.6 l3.2 2.7 -3.2 2.7 v-1.6 h-3z" fill="#fff" stroke="#7d8886" stroke-width=".8" stroke-linejoin="round"/><path d="M3.9 12.6 L7 8.8 9.6 10.6 8.6 12.6z" fill="#cc2a30"/><path d="M9.6 10.6 c1.6 -1.2 3.2 0 3.4 2 h-4.6z" fill="#8f8f8f"/><path d="M1.6 12.9 h11.6" stroke="#555" stroke-width="1"/></svg>
<span class="t" style="left:289.7px;top:428.69px;font-size:12px;line-height:14px;height:14px;color:#bbbdc2;transform:scaleX(0.8307);">FILTER</span>
<svg style="left:272.5px;top:446.71000000000004px;" width="14" height="14" viewBox="0 0 14 14"><rect x="1.7" y=".5" width="8.6" height="12.2" rx=".8" fill="#eaf1ef" stroke="#c3cfcc" stroke-width=".8"/><path d="M.5 5.6 h3 v-1.6 l3.2 2.7 -3.2 2.7 v-1.6 h-3z" fill="#fff" stroke="#7d8886" stroke-width=".8" stroke-linejoin="round"/><path d="M3.9 12.6 L7 8.8 9.6 10.6 8.6 12.6z" fill="#cc2a30"/><path d="M9.6 10.6 c1.6 -1.2 3.2 0 3.4 2 h-4.6z" fill="#8f8f8f"/><path d="M1.6 12.9 h11.6" stroke="#555" stroke-width="1"/></svg>
<span class="t" style="left:289.7px;top:447.08px;font-size:12px;line-height:14px;height:14px;color:#bbbdc2;transform:scaleX(0.8580);">REPORT_VIRTUALIZER</span>
<svg style="left:272.5px;top:465.1px;" width="14" height="14" viewBox="0 0 14 14"><rect x="1.7" y=".5" width="8.6" height="12.2" rx=".8" fill="#eaf1ef" stroke="#c3cfcc" stroke-width=".8"/><path d="M.5 5.6 h3 v-1.6 l3.2 2.7 -3.2 2.7 v-1.6 h-3z" fill="#fff" stroke="#7d8886" stroke-width=".8" stroke-linejoin="round"/><path d="M3.9 12.6 L7 8.8 9.6 10.6 8.6 12.6z" fill="#cc2a30"/><path d="M9.6 10.6 c1.6 -1.2 3.2 0 3.4 2 h-4.6z" fill="#8f8f8f"/><path d="M1.6 12.9 h11.6" stroke="#555" stroke-width="1"/></svg>
<span class="t" style="left:289.7px;top:465.47px;font-size:12px;line-height:14px;height:14px;color:#bbbdc2;transform:scaleX(0.8942);">IS_IGNORE_PAGINATION</span>
<svg style="left:272.5px;top:483.49px;" width="14" height="14" viewBox="0 0 14 14"><rect x="1.7" y=".5" width="8.6" height="12.2" rx=".8" fill="#eaf1ef" stroke="#c3cfcc" stroke-width=".8"/><path d="M.5 5.6 h3 v-1.6 l3.2 2.7 -3.2 2.7 v-1.6 h-3z" fill="#fff" stroke="#7d8886" stroke-width=".8" stroke-linejoin="round"/><path d="M3.9 12.6 L7 8.8 9.6 10.6 8.6 12.6z" fill="#cc2a30"/><path d="M9.6 10.6 c1.6 -1.2 3.2 0 3.4 2 h-4.6z" fill="#8f8f8f"/><path d="M1.6 12.9 h11.6" stroke="#555" stroke-width="1"/></svg>
<span class="t" style="left:289.7px;top:483.86px;font-size:12px;line-height:14px;height:14px;color:#000;transform:scaleX(1.0080);">context</span>
<svg style="left:247.0px;top:505.38000000000005px;" width="5" height="8" viewBox="0 0 5 8"><path d="M.7 .7 L4 4 .7 7.3" fill="none" stroke="#9a9a9a" stroke-width="1.1"/></svg>
<svg style="left:257.5px;top:503.88000000000005px;" width="14" height="9" viewBox="0 0 14 9"><rect x=".5" y=".5" width="13" height="7" fill="#fff" stroke="#b0b0b0" stroke-width=".9"/><rect x="1" y="1" width="12" height="2" fill="#e8e8e8"/><path d="M2.5 2.5 h3 M3.3 1.6 v2.4 M4.7 1.6 v2.4" stroke="#555" stroke-width=".6"/></svg>
<span class="t" style="left:274.5px;top:502.25px;font-size:12px;line-height:14px;height:14px;color:#000;transform:scaleX(0.9372);">Fields</span>
<svg style="left:247.0px;top:523.77px;" width="5" height="8" viewBox="0 0 5 8"><path d="M.7 .7 L4 4 .7 7.3" fill="none" stroke="#9a9a9a" stroke-width="1.1"/></svg>
<svg style="left:257.5px;top:521.27px;" width="14" height="12" viewBox="0 0 14 12"><rect x=".5" y="1.5" width="13" height="9" rx="2" fill="#eee" stroke="#b5b5b5" stroke-width=".9"/><path d="M7 1.5 v9" stroke="#c9c9c9" stroke-width=".7"/><text x="1.6" y="8.3" font-size="5.2" font-family="Liberation Sans" fill="#444">4</text><text x="8.6" y="8.3" font-size="5.2" font-family="Liberation Sans" fill="#444">2</text></svg>
<span class="t" style="left:274.5px;top:520.64px;font-size:12px;line-height:14px;height:14px;color:#000;transform:scaleX(0.9590);">Sort Fields</span>
<svg style="left:247.0px;top:542.16px;" width="5" height="8" viewBox="0 0 5 8"><path d="M.7 .7 L4 4 .7 7.3" fill="none" stroke="#9a9a9a" stroke-width="1.1"/></svg>
<span class="t" style="left:258.0px;top:538.78px;font-size:13.5px;line-height:15px;height:15px;color:#1a1a1a;font-style:italic;font-family:"Liberation Serif",serif;transform:scaleX(1.1803);">fx</span>
<span class="t" style="left:274.5px;top:539.03px;font-size:12px;line-height:14px;height:14px;color:#000;transform:scaleX(0.9687);">Variables</span>
<svg style="left:247.0px;top:560.55px;" width="5" height="8" viewBox="0 0 5 8"><path d="M.7 .7 L4 4 .7 7.3" fill="none" stroke="#9a9a9a" stroke-width="1.1"/></svg>
<svg style="left:257.5px;top:558.05px;" width="14" height="12" viewBox="0 0 14 12"><ellipse cx="6.5" cy="10" rx="6" ry="1.6" fill="#d8d8d8"/><path d="M1.5 2.5 h10 c0 4 -2 7 -5 7 s-5 -3 -5 -7z" fill="#fafafa" stroke="#a8a8a8" stroke-width=".8"/><ellipse cx="6.5" cy="2.7" rx="4.8" ry="1.3" fill="#8a4a2a"/><path d="M11.3 3.5 c2.4 0 2.4 3.4 -.6 3.6" fill="none" stroke="#a8a8a8" stroke-width=".9"/></svg>
<span class="t" style="left:274.5px;top:557.42px;font-size:12px;line-height:14px;height:14px;color:#000;transform:scaleX(0.9848);">Scriptlets</span>
<svg style="left:247.0px;top:578.9399999999999px;" width="5" height="8" viewBox="0 0 5 8"><path d="M.7 .7 L4 4 .7 7.3" fill="none" stroke="#9a9a9a" stroke-width="1.1"/></svg>
<svg style="left:257.5px;top:575.9399999999999px;" width="14" height="13" viewBox="0 0 14 13"><rect x=".5" y=".5" width="12.6" height="11.6" fill="#fdfdfd" stroke="#b3b3b3" stroke-width=".9"/><rect x="1" y="3.4" width="11.6" height="2.4" fill="#4f4f4f"/><path d="M1 8.6 h11.6" stroke="#b9b9b9" stroke-width=".9"/><path d="M1 6.6 h11.6" stroke="#e4e4e4" stroke-width="1"/></svg>
<span class="t" style="left:274.5px;top:575.81px;font-size:12px;line-height:14px;height:14px;color:#000;transform:scaleX(0.9922);">DepartmentBorrowCycle</span>
<svg style="left:244.5px;top:598.83px;" width="8" height="5" viewBox="0 0 8 5"><path d="M.7 .7 L4 4 7.3 .7" fill="none" stroke="#404040" stroke-width="1.2"/></svg>
<svg style="left:257.5px;top:594.33px;" width="14" height="13" viewBox="0 0 14 13"><rect x=".5" y=".5" width="12.6" height="11.6" fill="#fdfdfd" stroke="#b3b3b3" stroke-width=".9"/><rect x="1" y="3.4" width="11.6" height="2.4" fill="#4f4f4f"/><path d="M1 8.6 h11.6" stroke="#b9b9b9" stroke-width=".9"/><path d="M1 6.6 h11.6" stroke="#e4e4e4" stroke-width="1"/></svg>
<span class="t" style="left:274.5px;top:594.20px;font-size:12px;line-height:14px;height:14px;color:#000;transform:scaleX(0.9630);">BorrowCycle</span>
<svg style="left:260px;top:617.22px;" width="8" height="5" viewBox="0 0 8 5"><path d="M.7 .7 L4 4 7.3 .7" fill="none" stroke="#404040" stroke-width="1.2"/></svg>
<svg style="left:272.5px;top:611.9200000000001px;" width="12" height="14" viewBox="0 0 12 14"><rect x="2.5" y=".5" width="8.5" height="12.5" fill="#eef5f3" stroke="#b4c2c0" stroke-width=".9"/><path d="M0 6.5 h4.5 M3 4.5 l2 2 -2 2" fill="none" stroke="#8aa09c" stroke-width=".9"/></svg>
<span class="t" style="left:289.7px;top:612.59px;font-size:12px;line-height:14px;height:14px;color:#000;transform:scaleX(0.9400);">Parameters</span>
<svg style="left:288px;top:630.61px;" width="14" height="14" viewBox="0 0 14 14"><rect x="1.7" y=".5" width="8.6" height="12.2" rx=".8" fill="#eaf1ef" stroke="#c3cfcc" stroke-width=".8"/><path d="M.5 5.6 h3 v-1.6 l3.2 2.7 -3.2 2.7 v-1.6 h-3z" fill="#fff" stroke="#7d8886" stroke-width=".8" stroke-linejoin="round"/><path d="M3.9 12.6 L7 8.8 9.6 10.6 8.6 12.6z" fill="#cc2a30"/><path d="M9.6 10.6 c1.6 -1.2 3.2 0 3.4 2 h-4.6z" fill="#8f8f8f"/><path d="M1.6 12.9 h11.6" stroke="#555" stroke-width="1"/></svg>
<span class="t" style="left:305px;top:630.98px;font-size:12px;line-height:14px;height:14px;color:#bbbdc2;transform:scaleX(0.8480);">REPORT_CONTEXT</span>
<svg style="left:288px;top:649.0px;" width="14" height="14" viewBox="0 0 14 14"><rect x="1.7" y=".5" width="8.6" height="12.2" rx=".8" fill="#eaf1ef" stroke="#c3cfcc" stroke-width=".8"/><path d="M.5 5.6 h3 v-1.6 l3.2 2.7 -3.2 2.7 v-1.6 h-3z" fill="#fff" stroke="#7d8886" stroke-width=".8" stroke-linejoin="round"/><path d="M3.9 12.6 L7 8.8 9.6 10.6 8.6 12.6z" fill="#cc2a30"/><path d="M9.6 10.6 c1.6 -1.2 3.2 0 3.4 2 h-4.6z" fill="#8f8f8f"/><path d="M1.6 12.9 h11.6" stroke="#555" stroke-width="1"/></svg>
<span class="t" style="left:305px;top:649.37px;font-size:12px;line-height:14px;height:14px;color:#bbbdc2;transform:scaleX(0.8647);">REPORT_PARAMETERS_MAP</span>
<svg style="left:288px;top:667.39px;" width="14" height="14" viewBox="0 0 14 14"><rect x="1.7" y=".5" width="8.6" height="12.2" rx=".8" fill="#eaf1ef" stroke="#c3cfcc" stroke-width=".8"/><path d="M.5 5.6 h3 v-1.6 l3.2 2.7 -3.2 2.7 v-1.6 h-3z" fill="#fff" stroke="#7d8886" stroke-width=".8" stroke-linejoin="round"/><path d="M3.9 12.6 L7 8.8 9.6 10.6 8.6 12.6z" fill="#cc2a30"/><path d="M9.6 10.6 c1.6 -1.2 3.2 0 3.4 2 h-4.6z" fill="#8f8f8f"/><path d="M1.6 12.9 h11.6" stroke="#555" stroke-width="1"/></svg>
<span class="t" style="left:305px;top:667.76px;font-size:12px;line-height:14px;height:14px;color:#bbbdc2;transform:scaleX(0.8352);">JASPER_REPORTS_CONTEXT</span>
<svg style="left:288px;top:685.78px;" width="14" height="14" viewBox="0 0 14 14"><rect x="1.7" y=".5" width="8.6" height="12.2" rx=".8" fill="#eaf1ef" stroke="#c3cfcc" stroke-width=".8"/><path d="M.5 5.6 h3 v-1.6 l3.2 2.7 -3.2 2.7 v-1.6 h-3z" fill="#fff" stroke="#7d8886" stroke-width=".8" stroke-linejoin="round"/><path d="M3.9 12.6 L7 8.8 9.6 10.6 8.6 12.6z" fill="#cc2a30"/><path d="M9.6 10.6 c1.6 -1.2 3.2 0 3.4 2 h-4.6z" fill="#8f8f8f"/><path d="M1.6 12.9 h11.6" stroke="#555" stroke-width="1"/></svg>
<span class="t" style="left:305px;top:686.15px;font-size:12px;line-height:14px;height:14px;color:#bbbdc2;transform:scaleX(0.8115);">JASPER_REPORT</span>
<svg style="left:288px;top:704.17px;" width="14" height="14" viewBox="0 0 14 14"><rect x="1.7" y=".5" width="8.6" height="12.2" rx=".8" fill="#eaf1ef" stroke="#c3cfcc" stroke-width=".8"/><path d="M.5 5.6 h3 v-1.6 l3.2 2.7 -3.2 2.7 v-1.6 h-3z" fill="#fff" stroke="#7d8886" stroke-width=".8" stroke-linejoin="round"/><path d="M3.9 12.6 L7 8.8 9.6 10.6 8.6 12.6z" fill="#cc2a30"/><path d="M9.6 10.6 c1.6 -1.2 3.2 0 3.4 2 h-4.6z" fill="#8f8f8f"/><path d="M1.6 12.9 h11.6" stroke="#555" stroke-width="1"/></svg>
<span class="t" style="left:305px;top:704.54px;font-size:12px;line-height:14px;height:14px;color:#bbbdc2;transform:scaleX(0.8751);">REPORT_CONNECTION</span>
<svg style="left:288px;top:722.56px;" width="14" height="14" viewBox="0 0 14 14"><rect x="1.7" y=".5" width="8.6" height="12.2" rx=".8" fill="#eaf1ef" stroke="#c3cfcc" stroke-width=".8"/><path d="M.5 5.6 h3 v-1.6 l3.2 2.7 -3.2 2.7 v-1.6 h-3z" fill="#fff" stroke="#7d8886" stroke-width=".8" stroke-linejoin="round"/><path d="M3.9 12.6 L7 8.8 9.6 10.6 8.6 12.6z" fill="#cc2a30"/><path d="M9.6 10.6 c1.6 -1.2 3.2 0 3.4 2 h-4.6z" fill="#8f8f8f"/><path d="M1.6 12.9 h11.6" stroke="#555" stroke-width="1"/></svg>
<span class="t" style="left:305px;top:722.93px;font-size:12px;line-height:14px;height:14px;color:#bbbdc2;transform:scaleX(0.8748);">REPORT_MAX_COUNT</span>
<svg style="left:288px;top:740.9499999999999px;" width="14" height="14" viewBox="0 0 14 14"><rect x="1.7" y=".5" width="8.6" height="12.2" rx=".8" fill="#eaf1ef" stroke="#c3cfcc" stroke-width=".8"/><path d="M.5 5.6 h3 v-1.6 l3.2 2.7 -3.2 2.7 v-1.6 h-3z" fill="#fff" stroke="#7d8886" stroke-width=".8" stroke-linejoin="round"/><path d="M3.9 12.6 L7 8.8 9.6 10.6 8.6 12.6z" fill="#cc2a30"/><path d="M9.6 10.6 c1.6 -1.2 3.2 0 3.4 2 h-4.6z" fill="#8f8f8f"/><path d="M1.6 12.9 h11.6" stroke="#555" stroke-width="1"/></svg>
<span class="t" style="left:305px;top:741.32px;font-size:12px;line-height:14px;height:14px;color:#bbbdc2;transform:scaleX(0.8556);">REPORT_DATA_SOURCE</span>
<svg style="left:288px;top:759.3399999999999px;" width="14" height="14" viewBox="0 0 14 14"><rect x="1.7" y=".5" width="8.6" height="12.2" rx=".8" fill="#eaf1ef" stroke="#c3cfcc" stroke-width=".8"/><path d="M.5 5.6 h3 v-1.6 l3.2 2.7 -3.2 2.7 v-1.6 h-3z" fill="#fff" stroke="#7d8886" stroke-width=".8" stroke-linejoin="round"/><path d="M3.9 12.6 L7 8.8 9.6 10.6 8.6 12.6z" fill="#cc2a30"/><path d="M9.6 10.6 c1.6 -1.2 3.2 0 3.4 2 h-4.6z" fill="#8f8f8f"/><path d="M1.6 12.9 h11.6" stroke="#555" stroke-width="1"/></svg>
<span class="t" style="left:305px;top:759.71px;font-size:12px;line-height:14px;height:14px;color:#bbbdc2;transform:scaleX(0.8206);">REPORT_SCRIPTLET</span>
<svg style="left:288px;top:777.73px;" width="14" height="14" viewBox="0 0 14 14"><rect x="1.7" y=".5" width="8.6" height="12.2" rx=".8" fill="#eaf1ef" stroke="#c3cfcc" stroke-width=".8"/><path d="M.5 5.6 h3 v-1.6 l3.2 2.7 -3.2 2.7 v-1.6 h-3z" fill="#fff" stroke="#7d8886" stroke-width=".8" stroke-linejoin="round"/><path d="M3.9 12.6 L7 8.8 9.6 10.6 8.6 12.6z" fill="#cc2a30"/><path d="M9.6 10.6 c1.6 -1.2 3.2 0 3.4 2 h-4.6z" fill="#8f8f8f"/><path d="M1.6 12.9 h11.6" stroke="#555" stroke-width="1"/></svg>
<span class="t" style="left:305px;top:778.10px;font-size:12px;line-height:14px;height:14px;color:#bbbdc2;transform:scaleX(0.8332);">REPORT_LOCALE</span>
<svg style="left:288px;top:796.12px;" width="14" height="14" viewBox="0 0 14 14"><rect x="1.7" y=".5" width="8.6" height="12.2" rx=".8" fill="#eaf1ef" stroke="#c3cfcc" stroke-width=".8"/><path d="M.5 5.6 h3 v-1.6 l3.2 2.7 -3.2 2.7 v-1.6 h-3z" fill="#fff" stroke="#7d8886" stroke-width=".8" stroke-linejoin="round"/><path d="M3.9 12.6 L7 8.8 9.6 10.6 8.6 12.6z" fill="#cc2a30"/><path d="M9.6 10.6 c1.6 -1.2 3.2 0 3.4 2 h-4.6z" fill="#8f8f8f"/><path d="M1.6 12.9 h11.6" stroke="#555" stroke-width="1"/></svg>
<span class="t" style="left:305px;top:796.49px;font-size:12px;line-height:14px;height:14px;color:#bbbdc2;transform:scaleX(0.8503);">REPORT_RESOURCE_BUNDLE</span>
<svg style="left:288px;top:814.51px;" width="14" height="14" viewBox="0 0 14 14"><rect x="1.7" y=".5" width="8.6" height="12.2" rx=".8" fill="#eaf1ef" stroke="#c3cfcc" stroke-width=".8"/><path d="M.5 5.6 h3 v-1.6 l3.2 2.7 -3.2 2.7 v-1.6 h-3z" fill="#fff" stroke="#7d8886" stroke-width=".8" stroke-linejoin="round"/><path d="M3.9 12.6 L7 8.8 9.6 10.6 8.6 12.6z" fill="#cc2a30"/><path d="M9.6 10.6 c1.6 -1.2 3.2 0 3.4 2 h-4.6z" fill="#8f8f8f"/><path d="M1.6 12.9 h11.6" stroke="#555" stroke-width="1"/></svg>
<span class="t" style="left:305px;top:814.88px;font-size:12px;line-height:14px;height:14px;color:#bbbdc2;transform:scaleX(0.8623);">REPORT_TIME_ZONE</span>
<svg style="left:288px;top:832.9px;" width="14" height="14" viewBox="0 0 14 14"><rect x="1.7" y=".5" width="8.6" height="12.2" rx=".8" fill="#eaf1ef" stroke="#c3cfcc" stroke-width=".8"/><path d="M.5 5.6 h3 v-1.6 l3.2 2.7 -3.2 2.7 v-1.6 h-3z" fill="#fff" stroke="#7d8886" stroke-width=".8" stroke-linejoin="round"/><path d="M3.9 12.6 L7 8.8 9.6 10.6 8.6 12.6z" fill="#cc2a30"/><path d="M9.6 10.6 c1.6 -1.2 3.2 0 3.4 2 h-4.6z" fill="#8f8f8f"/><path d="M1.6 12.9 h11.6" stroke="#555" stroke-width="1"/></svg>
<span class="t" style="left:305px;top:833.27px;font-size:12px;line-height:14px;height:14px;color:#bbbdc2;transform:scaleX(0.8513);">REPORT_FORMAT_FACTORY</span>
<svg style="left:288px;top:851.29px;" width="14" height="14" viewBox="0 0 14 14"><rect x="1.7" y=".5" width="8.6" height="12.2" rx=".8" fill="#eaf1ef" stroke="#c3cfcc" stroke-width=".8"/><path d="M.5 5.6 h3 v-1.6 l3.2 2.7 -3.2 2.7 v-1.6 h-3z" fill="#fff" stroke="#7d8886" stroke-width=".8" stroke-linejoin="round"/><path d="M3.9 12.6 L7 8.8 9.6 10.6 8.6 12.6z" fill="#cc2a30"/><path d="M9.6 10.6 c1.6 -1.2 3.2 0 3.4 2 h-4.6z" fill="#8f8f8f"/><path d="M1.6 12.9 h11.6" stroke="#555" stroke-width="1"/></svg>
<span class="t" style="left:305px;top:851.66px;font-size:12px;line-height:14px;height:14px;color:#bbbdc2;transform:scaleX(0.8430);">REPORT_CLASS_LOADER</span>
<svg style="left:288px;top:869.68px;" width="14" height="14" viewBox="0 0 14 14"><rect x="1.7" y=".5" width="8.6" height="12.2" rx=".8" fill="#eaf1ef" stroke="#c3cfcc" stroke-width=".8"/><path d="M.5 5.6 h3 v-1.6 l3.2 2.7 -3.2 2.7 v-1.6 h-3z" fill="#fff" stroke="#7d8886" stroke-width=".8" stroke-linejoin="round"/><path d="M3.9 12.6 L7 8.8 9.6 10.6 8.6 12.6z" fill="#cc2a30"/><path d="M9.6 10.6 c1.6 -1.2 3.2 0 3.4 2 h-4.6z" fill="#8f8f8f"/><path d="M1.6 12.9 h11.6" stroke="#555" stroke-width="1"/></svg>
<span class="t" style="left:305px;top:870.05px;font-size:12px;line-height:14px;height:14px;color:#bbbdc2;transform:scaleX(0.8430);">REPORT_TEMPLATES</span>
<svg style="left:288px;top:888.0699999999999px;" width="14" height="14" viewBox="0 0 14 14"><rect x="1.7" y=".5" width="8.6" height="12.2" rx=".8" fill="#eaf1ef" stroke="#c3cfcc" stroke-width=".8"/><path d="M.5 5.6 h3 v-1.6 l3.2 2.7 -3.2 2.7 v-1.6 h-3z" fill="#fff" stroke="#7d8886" stroke-width=".8" stroke-linejoin="round"/><path d="M3.9 12.6 L7 8.8 9.6 10.6 8.6 12.6z" fill="#cc2a30"/><path d="M9.6 10.6 c1.6 -1.2 3.2 0 3.4 2 h-4.6z" fill="#8f8f8f"/><path d="M1.6 12.9 h11.6" stroke="#555" stroke-width="1"/></svg>
<span class="t" style="left:305px;top:888.44px;font-size:12px;line-height:14px;height:14px;color:#bbbdc2;transform:scaleX(0.8386);">SORT_FIELDS</span>
<svg style="left:288px;top:906.46px;" width="14" height="14" viewBox="0 0 14 14"><rect x="1.7" y=".5" width="8.6" height="12.2" rx=".8" fill="#eaf1ef" stroke="#c3cfcc" stroke-width=".8"/><path d="M.5 5.6 h3 v-1.6 l3.2 2.7 -3.2 2.7 v-1.6 h-3z" fill="#fff" stroke="#7d8886" stroke-width=".8" stroke-linejoin="round"/><path d="M3.9 12.6 L7 8.8 9.6 10.6 8.6 12.6z" fill="#cc2a30"/><path d="M9.6 10.6 c1.6 -1.2 3.2 0 3.4 2 h-4.6z" fill="#8f8f8f"/><path d="M1.6 12.9 h11.6" stroke="#555" stroke-width="1"/></svg>
<span class="t" style="left:305px;top:906.83px;font-size:12px;line-height:14px;height:14px;color:#bbbdc2;transform:scaleX(0.8307);">FILTER</span>
<svg style="left:288px;top:924.85px;" width="14" height="14" viewBox="0 0 14 14"><rect x="1.7" y=".5" width="8.6" height="12.2" rx=".8" fill="#eaf1ef" stroke="#c3cfcc" stroke-width=".8"/><path d="M.5 5.6 h3 v-1.6 l3.2 2.7 -3.2 2.7 v-1.6 h-3z" fill="#fff" stroke="#7d8886" stroke-width=".8" stroke-linejoin="round"/><path d="M3.9 12.6 L7 8.8 9.6 10.6 8.6 12.6z" fill="#cc2a30"/><path d="M9.6 10.6 c1.6 -1.2 3.2 0 3.4 2 h-4.6z" fill="#8f8f8f"/><path d="M1.6 12.9 h11.6" stroke="#555" stroke-width="1"/></svg>
<span class="t" style="left:305px;top:925.22px;font-size:12px;line-height:14px;height:14px;color:#000;transform:scaleX(1.0080);">context</span>
<svg style="left:262.5px;top:946.74px;" width="5" height="8" viewBox="0 0 5 8"><path d="M.7 .7 L4 4 .7 7.3" fill="none" stroke="#9a9a9a" stroke-width="1.1"/></svg>
<svg style="left:272.5px;top:945.24px;" width="14" height="9" viewBox="0 0 14 9"><rect x=".5" y=".5" width="13" height="7" fill="#fff" stroke="#b0b0b0" stroke-width=".9"/><rect x="1" y="1" width="12" height="2" fill="#e8e8e8"/><path d="M2.5 2.5 h3 M3.3 1.6 v2.4 M4.7 1.6 v2.4" stroke="#555" stroke-width=".6"/></svg>
<span class="t" style="left:289.7px;top:943.61px;font-size:12px;line-height:14px;height:14px;color:#000;transform:scaleX(0.9372);">Fields</span>
<svg style="left:267.5px;top:483.0px;mix-blend-mode:multiply" width="77.5" height="23.6" viewBox="0 0 77.5 23.6"><path d="M1.0 4.5 L22.5 3.0 L52.5 1.6 L76.0 1.0 L76.5 21.3 L52.5 21.8 L22.5 22.6 L1.0 22.6z" fill="#ffff00" stroke="#ffff00" stroke-width="1.2" stroke-linejoin="round"/></svg>
<svg style="left:237.5px;top:579.8px;mix-blend-mode:multiply" width="103.1" height="32.6" viewBox="0 0 103.1 32.6"><path d="M1.0 1.7 L24.5 1.0 L52.5 4.2 L84.5 8.2 L101.5 11.0 L102.1 31.0 L62.5 31.6 L40.5 31.0 L24.5 24.7 L1.0 23.0z" fill="#ffff00" stroke="#ffff00" stroke-width="1.2" stroke-linejoin="round"/></svg>
<svg style="left:286.3px;top:915.4px;mix-blend-mode:multiply" width="65.5" height="27.2" viewBox="0 0 65.5 27.2"><path d="M1.0 5.0 L41.7 4.8 L47.7 5.6 L54.2 3.2 L56.7 1.0 L64.3 1.0 L64.5 22.2 L60.7 25.4 L38.7 26.2 L15.7 24.0 L10.7 25.6 L1.0 25.6z" fill="#ffff00" stroke="#ffff00" stroke-width="1.2" stroke-linejoin="round"/></svg>
<div style="left:222px;top:957.5px;width:305px;height:4.5px;background:#e1e6f6;"></div>
<div style="left:529.7px;top:70px;width:1010.5px;height:887.5px;background:#f4f5fb;border-radius:6px 6px 4px 4px;"></div>
<div style="left:529.7px;top:70px;width:1010.5px;height:24px;background:#f4f5fb;border-radius:6px 6px 0 0;"></div>
<svg style="left:535px;top:76px;" width="12" height="13" viewBox="0 0 12 13"><g opacity=".55"><path d="M1.5 .5 h6 l3 3 v8.5 h-9z" fill="#fbfcfd" stroke="#a9b2bd" stroke-width=".9"/><path d="M7.5 .5 v3 h3" fill="#e6ebf0" stroke="#a9b2bd" stroke-width=".7"/><path d="M2.3 10.8 l3.2 -3.8 2.3 2.3 1 -1 1.9 2.5z" fill="#c8202a"/><path d="M.5 12.2 h11" stroke="#7a7a7a" stroke-width="1.3"/></g></svg>
<span class="t" style="left:549.7px;top:76.27px;font-size:12px;line-height:14px;height:14px;color:#9b9da8;transform:scaleX(0.9521);">Reports_Cataloging_card_horizontal_A4....</span>
<svg style="left:796.5px;top:76px;" width="12" height="13" viewBox="0 0 12 13"><g opacity=".55"><path d="M1.5 .5 h6 l3 3 v8.5 h-9z" fill="#fbfcfd" stroke="#a9b2bd" stroke-width=".9"/><path d="M7.5 .5 v3 h3" fill="#e6ebf0" stroke="#a9b2bd" stroke-width=".7"/><path d="M2.3 10.8 l3.2 -3.8 2.3 2.3 1 -1 1.9 2.5z" fill="#c8202a"/><path d="M.5 12.2 h11" stroke="#7a7a7a" stroke-width="1.3"/></g></svg>
<span class="t" style="left:811px;top:76.27px;font-size:12px;line-height:14px;height:14px;color:#9b9da8;transform:scaleX(0.9536);">Reports_List_of_work.jrxml</span>
<svg style="left:973.5px;top:76px;" width="12" height="13" viewBox="0 0 12 13"><g opacity=".55"><path d="M1.5 .5 h6 l3 3 v8.5 h-9z" fill="#fbfcfd" stroke="#a9b2bd" stroke-width=".9"/><path d="M7.5 .5 v3 h3" fill="#e6ebf0" stroke="#a9b2bd" stroke-width=".7"/><path d="M2.3 10.8 l3.2 -3.8 2.3 2.3 1 -1 1.9 2.5z" fill="#c8202a"/><path d="M.5 12.2 h11" stroke="#7a7a7a" stroke-width="1.3"/></g></svg>
<span class="t" style="left:988px;top:76.27px;font-size:12px;line-height:14px;height:14px;color:#9b9da8;transform:scaleX(0.9454);">*Exchange_stock_protocol_Exchange_sto...</span>
<div style="left:1230px;top:70px;width:263px;height:24px;background:linear-gradient(#e9eff7 0%,#f3f6fb 55%,#ffffff 100%);border-radius:6px 6px 0 0;"></div>
<svg style="left:1235px;top:76px;" width="12" height="13" viewBox="0 0 12 13"><g><path d="M1.5 .5 h6 l3 3 v8.5 h-9z" fill="#fbfcfd" stroke="#a9b2bd" stroke-width=".9"/><path d="M7.5 .5 v3 h3" fill="#e6ebf0" stroke="#a9b2bd" stroke-width=".7"/><path d="M2.3 10.8 l3.2 -3.8 2.3 2.3 1 -1 1.9 2.5z" fill="#c8202a"/><path d="M.5 12.2 h11" stroke="#7a7a7a" stroke-width="1.3"/></g></svg>
<span class="t" style="left:1249.5px;top:76.27px;font-size:12px;line-height:14px;height:14px;color:#000;transform:scaleX(0.9401);">Readers_with_absence_borrowings_Read...</span>
<svg style="left:1477.5px;top:78px;" width="9" height="9" viewBox="0 0 9 9"><path d="M1.4 1.4 L7.6 7.6 M7.6 1.4 L1.4 7.6" stroke="#6f6f6f" stroke-width="2.7" stroke-linecap="square"/><path d="M1.4 1.4 L7.6 7.6 M7.6 1.4 L1.4 7.6" stroke="#fff" stroke-width="1.1" stroke-linecap="square"/></svg>
<svg style="left:1502px;top:76.2px;" width="9" height="3.2" viewBox="0 0 9 3.2"><rect x=".5" y=".5" width="8" height="2.2" fill="#fff" stroke="#6a6a6a" stroke-width="1"/></svg>
<svg style="left:1520px;top:75.8px;" width="9" height="8.6" viewBox="0 0 9 8.6"><rect x=".5" y=".5" width="8" height="7.6" fill="#fff" stroke="#6a6a6a" stroke-width="1"/><rect x="0" y="0" width="9" height="2" fill="#6a6a6a"/></svg>
<div style="left:532px;top:98px;width:90px;height:20px;background:#cce4f7;border:1px solid #9fcdf2;box-sizing:border-box;"></div>
<svg style="left:536.5px;top:103.5px;" width="12" height="13" viewBox="0 0 12 13"><g><path d="M1.5 .5 h6 l3 3 v8.5 h-9z" fill="#fbfcfd" stroke="#a9b2bd" stroke-width=".9"/><path d="M7.5 .5 v3 h3" fill="#e6ebf0" stroke="#a9b2bd" stroke-width=".7"/><path d="M2.3 10.8 l3.2 -3.8 2.3 2.3 1 -1 1.9 2.5z" fill="#c8202a"/><path d="M.5 12.2 h11" stroke="#7a7a7a" stroke-width="1.3"/></g></svg>
<span class="t" style="left:551.7px;top:103.07px;font-size:12px;line-height:14px;height:14px;color:#000;transform:scaleX(0.9883);">Main Report</span>
<svg style="left:625.5px;top:104px;" width="12" height="10" viewBox="0 0 12 10"><rect x="0" y=".2" width="2" height="2" fill="#333"/><rect x="0" y="4" width="2" height="2" fill="#333"/><rect x="0" y="7.8" width="2" height="2" fill="#333"/><path d="M3.8 1.2 h7.7 M3.8 5 h7.7 M3.8 8.8 h7.7" stroke="#333" stroke-width="1.1"/></svg>
<span class="t" style="left:641.3px;top:103.07px;font-size:12px;line-height:14px;height:14px;color:#000;transform:scaleX(0.9103);">List</span>
<svg style="left:668px;top:104px;" width="12" height="10" viewBox="0 0 12 10"><rect x="0" y=".2" width="2" height="2" fill="#333"/><rect x="0" y="4" width="2" height="2" fill="#333"/><rect x="0" y="7.8" width="2" height="2" fill="#333"/><path d="M3.8 1.2 h7.7 M3.8 5 h7.7 M3.8 8.8 h7.7" stroke="#333" stroke-width="1.1"/></svg>
<span class="t" style="left:683.8px;top:103.07px;font-size:12px;line-height:14px;height:14px;color:#000;transform:scaleX(0.9103);">List</span>
<svg style="left:1278px;top:102px;" width="13" height="13" viewBox="0 0 13 13"><rect x=".5" y=".5" width="12" height="12" rx="1" fill="#f3f3f3" stroke="#c4c4c4" stroke-width=".8"/><rect x="1" y="3" width="11" height="2.2" fill="#6a6a6a"/><path d="M1 8.5 h11" stroke="#b5b5b5" stroke-width="1"/></svg>
<svg style="left:1301px;top:102px;" width="11" height="13" viewBox="0 0 11 13"><path d="M.5 .5 h6.5 l3 3 v9 h-9.5z" fill="#fdfdfd" stroke="#9aa3b5" stroke-width=".9"/><path d="M7 .5 v3 h3" fill="#e8ecf5" stroke="#9aa3b5" stroke-width=".7"/><text x=".6" y="11.6" font-size="6" font-weight="bold" fill="#3a4f9a" font-family="Liberation Sans">010</text></svg>
<svg style="left:1321px;top:107px;" width="8" height="4" viewBox="0 0 8 4"><path d="M0 0 h8 l-4 4z" fill="#000"/></svg>
<svg style="left:1337.5px;top:102.6px;" width="11" height="12" viewBox="0 0 11 12"><rect x=".8" y=".5" width="8" height="9.6" rx=".8" fill="#dcdcdc" stroke="#a2a2a2" stroke-width=".8"/><path d="M1 3.6 h7.6 M1 6.8 h7.6" stroke="#9a9a9a" stroke-width=".7"/><path d="M1.6 1.9 h6.4 M1.6 5.1 h6.4" stroke="#f2f2f2" stroke-width=".9"/><rect x="0" y="8.6" width="9.6" height="3" fill="#5a5a5a"/><path d="M10.2 4 L6.4 7.8" stroke="#2a8ae0" stroke-width="2.1"/><path d="M5.2 5.6 v3.4 h3.4z" fill="#2a8ae0"/></svg>
<div style="left:1354px;top:97px;width:1px;height:24px;background:#a0a0a0;"></div>
<svg style="left:1363px;top:103px;" width="12" height="12" viewBox="0 0 12 12"><circle cx="4.8" cy="4.8" r="3.9" fill="#fffef8" stroke="#c0b48e" stroke-width="1.1"/><path d="M7.8 7.8 L11 11" stroke="#9a7a5a" stroke-width="1.7"/><path d="M2.8 4.8 h4" stroke="#2a4ac8" stroke-width="1.3"/><path d="M4.8 2.8 v4" stroke="#2a4ac8" stroke-width="1.3"/></svg>
<svg style="left:1382px;top:103px;" width="12" height="12" viewBox="0 0 12 12"><circle cx="4.8" cy="4.8" r="3.9" fill="#fffef8" stroke="#c0b48e" stroke-width="1.1"/><path d="M7.8 7.8 L11 11" stroke="#9a7a5a" stroke-width="1.7"/><path d="M2.8 4.8 h4" stroke="#2a4ac8" stroke-width="1.3"/></svg>
<div style="left:1397px;top:97.7px;width:63.3px;height:22px;background:#fff;border:1px solid #868686;box-sizing:border-box;"></div>
<span class="t" style="left:1403.8px;top:102.28px;font-size:12.3px;line-height:14px;height:14px;color:#000;transform:scaleX(0.8646);">100%</span>
<svg style="left:1448px;top:107px;" width="9" height="5" viewBox="0 0 9 5"><path d="M.6 .6 L4.5 4.2 8.4 .6" fill="none" stroke="#555" stroke-width="1"/></svg>
<div style="left:1462px;top:97px;width:1px;height:24px;background:#a0a0a0;"></div>
<span class="t" style="left:1472px;top:102.87px;font-size:12px;line-height:14px;height:14px;color:#000;transform:scaleX(0.9801);">Settings</span>
<svg style="left:1526px;top:107px;" width="8" height="4" viewBox="0 0 8 4"><path d="M0 0 h8 l-4 4z" fill="#000"/></svg>
<div style="left:532px;top:122px;width:1004px;height:13px;background:#fff;"></div>
<div style="left:545px;top:123px;width:24.3px;height:11.5px;background:#c0c0c0;"></div>
<div style="left:1014px;top:123px;width:422.5px;height:11.5px;background:#c0c0c0;"></div>
<div style="left:569.3px;top:123px;width:444.7px;height:11.5px;background:#fff;"></div>
<div style="left:532px;top:122px;width:13px;height:13px;background:#f4f5fb;"></div>
<span class="t" style="left:567.2px;top:123.05px;font-size:10px;line-height:11px;height:11px;color:#2a2a2a;transform:scaleX(1.0069);">0</span>
<div style="left:574.9px;top:127.9px;width:1.3px;height:1.3px;background:#4a4a4a;"></div>
<div style="left:580.9px;top:127.9px;width:1.3px;height:1.3px;background:#4a4a4a;"></div>
<div style="left:586.9px;top:127.9px;width:1.3px;height:1.3px;background:#4a4a4a;"></div>
<div style="left:592.9px;top:127.9px;width:1.3px;height:1.3px;background:#4a4a4a;"></div>
<div style="left:597.9px;top:126.3px;width:1.3px;height:4.4px;background:#4a4a4a;"></div>
<div style="left:603.9px;top:127.9px;width:1.3px;height:1.3px;background:#4a4a4a;"></div>
<div style="left:609.9px;top:127.9px;width:1.3px;height:1.3px;background:#4a4a4a;"></div>
<div style="left:615.9px;top:127.9px;width:1.3px;height:1.3px;background:#4a4a4a;"></div>
<div style="left:620.9px;top:127.9px;width:1.3px;height:1.3px;background:#4a4a4a;"></div>
<span class="t" style="left:624.8000000000001px;top:123.05px;font-size:10px;line-height:11px;height:11px;color:#2a2a2a;transform:scaleX(1.0069);">1</span>
<div style="left:632.9px;top:127.9px;width:1.3px;height:1.3px;background:#4a4a4a;"></div>
<div style="left:638.9px;top:127.9px;width:1.3px;height:1.3px;background:#4a4a4a;"></div>
<div style="left:643.9px;top:127.9px;width:1.3px;height:1.3px;background:#4a4a4a;"></div>
<div style="left:649.9px;top:127.9px;width:1.3px;height:1.3px;background:#4a4a4a;"></div>
<div style="left:655.9px;top:126.3px;width:1.3px;height:4.4px;background:#4a4a4a;"></div>
<div style="left:661.9px;top:127.9px;width:1.3px;height:1.3px;background:#4a4a4a;"></div>
<div style="left:666.9px;top:127.9px;width:1.3px;height:1.3px;background:#4a4a4a;"></div>
<div style="left:672.9px;top:127.9px;width:1.3px;height:1.3px;background:#4a4a4a;"></div>
<div style="left:678.9px;top:127.9px;width:1.3px;height:1.3px;background:#4a4a4a;"></div>
<span class="t" style="left:682.4000000000001px;top:123.05px;font-size:10px;line-height:11px;height:11px;color:#2a2a2a;transform:scaleX(1.0069);">2</span>
<div style="left:689.9px;top:127.9px;width:1.3px;height:1.3px;background:#4a4a4a;"></div>
<div style="left:695.9px;top:127.9px;width:1.3px;height:1.3px;background:#4a4a4a;"></div>
<div style="left:701.9px;top:127.9px;width:1.3px;height:1.3px;background:#4a4a4a;"></div>
<div style="left:707.9px;top:127.9px;width:1.3px;height:1.3px;background:#4a4a4a;"></div>
<div style="left:713.9px;top:126.3px;width:1.3px;height:4.4px;background:#4a4a4a;"></div>
<div style="left:718.9px;top:127.9px;width:1.3px;height:1.3px;background:#4a4a4a;"></div>
<div style="left:724.9px;top:127.9px;width:1.3px;height:1.3px;background:#4a4a4a;"></div>
<div style="left:730.9px;top:127.9px;width:1.3px;height:1.3px;background:#4a4a4a;"></div>
<div style="left:736.9px;top:127.9px;width:1.3px;height:1.3px;background:#4a4a4a;"></div>
<span class="t" style="left:740.0px;top:123.05px;font-size:10px;line-height:11px;height:11px;color:#2a2a2a;transform:scaleX(1.0069);">3</span>
<div style="left:747.9px;top:127.9px;width:1.3px;height:1.3px;background:#4a4a4a;"></div>
<div style="left:753.9px;top:127.9px;width:1.3px;height:1.3px;background:#4a4a4a;"></div>
<div style="left:759.9px;top:127.9px;width:1.3px;height:1.3px;background:#4a4a4a;"></div>
<div style="left:764.9px;top:127.9px;width:1.3px;height:1.3px;background:#4a4a4a;"></div>
<div style="left:770.9px;top:126.3px;width:1.3px;height:4.4px;background:#4a4a4a;"></div>
<div style="left:776.9px;top:127.9px;width:1.3px;height:1.3px;background:#4a4a4a;"></div>
<div style="left:782.9px;top:127.9px;width:1.3px;height:1.3px;background:#4a4a4a;"></div>
<div style="left:787.9px;top:127.9px;width:1.3px;height:1.3px;background:#4a4a4a;"></div>
<div style="left:793.9px;top:127.9px;width:1.3px;height:1.3px;background:#4a4a4a;"></div>
<span class="t" style="left:797.6px;top:123.05px;font-size:10px;line-height:11px;height:11px;color:#2a2a2a;transform:scaleX(1.0069);">4</span>
<div style="left:805.9px;top:127.9px;width:1.3px;height:1.3px;background:#4a4a4a;"></div>
<div style="left:810.9px;top:127.9px;width:1.3px;height:1.3px;background:#4a4a4a;"></div>
<div style="left:816.9px;top:127.9px;width:1.3px;height:1.3px;background:#4a4a4a;"></div>
<div style="left:822.9px;top:127.9px;width:1.3px;height:1.3px;background:#4a4a4a;"></div>
<div style="left:828.9px;top:126.3px;width:1.3px;height:4.4px;background:#4a4a4a;"></div>
<div style="left:833.9px;top:127.9px;width:1.3px;height:1.3px;background:#4a4a4a;"></div>
<div style="left:839.9px;top:127.9px;width:1.3px;height:1.3px;background:#4a4a4a;"></div>
<div style="left:845.9px;top:127.9px;width:1.3px;height:1.3px;background:#4a4a4a;"></div>
<div style="left:851.9px;top:127.9px;width:1.3px;height:1.3px;background:#4a4a4a;"></div>
<span class="t" style="left:855.2px;top:123.05px;font-size:10px;line-height:11px;height:11px;color:#2a2a2a;transform:scaleX(1.0069);">5</span>
<div style="left:862.9px;top:127.9px;width:1.3px;height:1.3px;background:#4a4a4a;"></div>
<div style="left:868.9px;top:127.9px;width:1.3px;height:1.3px;background:#4a4a4a;"></div>
<div style="left:874.9px;top:127.9px;width:1.3px;height:1.3px;background:#4a4a4a;"></div>
<div style="left:880.9px;top:127.9px;width:1.3px;height:1.3px;background:#4a4a4a;"></div>
<div style="left:885.9px;top:126.3px;width:1.3px;height:4.4px;background:#4a4a4a;"></div>
<div style="left:891.9px;top:127.9px;width:1.3px;height:1.3px;background:#4a4a4a;"></div>
<div style="left:897.9px;top:127.9px;width:1.3px;height:1.3px;background:#4a4a4a;"></div>
<div style="left:903.9px;top:127.9px;width:1.3px;height:1.3px;background:#4a4a4a;"></div>
<div style="left:908.9px;top:127.9px;width:1.3px;height:1.3px;background:#4a4a4a;"></div>
<span class="t" style="left:912.8000000000001px;top:123.05px;font-size:10px;line-height:11px;height:11px;color:#2a2a2a;transform:scaleX(1.0069);">6</span>
<div style="left:920.9px;top:127.9px;width:1.3px;height:1.3px;background:#4a4a4a;"></div>
<div style="left:926.9px;top:127.9px;width:1.3px;height:1.3px;background:#4a4a4a;"></div>
<div style="left:931.9px;top:127.9px;width:1.3px;height:1.3px;background:#4a4a4a;"></div>
<div style="left:937.9px;top:127.9px;width:1.3px;height:1.3px;background:#4a4a4a;"></div>
<div style="left:943.9px;top:126.3px;width:1.3px;height:4.4px;background:#4a4a4a;"></div>
<div style="left:949.9px;top:127.9px;width:1.3px;height:1.3px;background:#4a4a4a;"></div>
<div style="left:954.9px;top:127.9px;width:1.3px;height:1.3px;background:#4a4a4a;"></div>
<div style="left:960.9px;top:127.9px;width:1.3px;height:1.3px;background:#4a4a4a;"></div>
<div style="left:966.9px;top:127.9px;width:1.3px;height:1.3px;background:#4a4a4a;"></div>
<span class="t" style="left:970.4000000000001px;top:123.05px;font-size:10px;line-height:11px;height:11px;color:#2a2a2a;transform:scaleX(1.0069);">7</span>
<div style="left:977.9px;top:127.9px;width:1.3px;height:1.3px;background:#4a4a4a;"></div>
<div style="left:983.9px;top:127.9px;width:1.3px;height:1.3px;background:#4a4a4a;"></div>
<div style="left:989.9px;top:127.9px;width:1.3px;height:1.3px;background:#4a4a4a;"></div>
<div style="left:995.9px;top:127.9px;width:1.3px;height:1.3px;background:#4a4a4a;"></div>
<div style="left:1001.9px;top:126.3px;width:1.3px;height:4.4px;background:#4a4a4a;"></div>
<div style="left:1006.9px;top:127.9px;width:1.3px;height:1.3px;background:#4a4a4a;"></div>
<div style="left:1012.9px;top:127.9px;width:1.3px;height:1.3px;background:#4a4a4a;"></div>
<div style="left:1018.9px;top:127.9px;width:1.3px;height:1.3px;background:#4a4a4a;"></div>
<div style="left:1024.9px;top:127.9px;width:1.3px;height:1.3px;background:#4a4a4a;"></div>
<span class="t" style="left:1028.0px;top:123.05px;font-size:10px;line-height:11px;height:11px;color:#2a2a2a;transform:scaleX(1.0069);">8</span>
<div style="left:1035.9px;top:127.9px;width:1.3px;height:1.3px;background:#4a4a4a;"></div>
<div style="left:1041.9px;top:127.9px;width:1.3px;height:1.3px;background:#4a4a4a;"></div>
<div style="left:1047.9px;top:127.9px;width:1.3px;height:1.3px;background:#4a4a4a;"></div>
<div style="left:1052.9px;top:127.9px;width:1.3px;height:1.3px;background:#4a4a4a;"></div>
<div style="left:1058.9px;top:126.3px;width:1.3px;height:4.4px;background:#4a4a4a;"></div>
<div style="left:1064.9px;top:127.9px;width:1.3px;height:1.3px;background:#4a4a4a;"></div>
<div style="left:1070.9px;top:127.9px;width:1.3px;height:1.3px;background:#4a4a4a;"></div>
<div style="left:1075.9px;top:127.9px;width:1.3px;height:1.3px;background:#4a4a4a;"></div>
<div style="left:1081.9px;top:127.9px;width:1.3px;height:1.3px;background:#4a4a4a;"></div>
<span class="t" style="left:1085.6000000000001px;top:123.05px;font-size:10px;line-height:11px;height:11px;color:#2a2a2a;transform:scaleX(1.0069);">9</span>
<div style="left:1093.9px;top:127.9px;width:1.3px;height:1.3px;background:#4a4a4a;"></div>
<div style="left:1098.9px;top:127.9px;width:1.3px;height:1.3px;background:#4a4a4a;"></div>
<div style="left:1104.9px;top:127.9px;width:1.3px;height:1.3px;background:#4a4a4a;"></div>
<div style="left:1110.9px;top:127.9px;width:1.3px;height:1.3px;background:#4a4a4a;"></div>
<div style="left:1116.9px;top:126.3px;width:1.3px;height:4.4px;background:#4a4a4a;"></div>
<div style="left:1121.9px;top:127.9px;width:1.3px;height:1.3px;background:#4a4a4a;"></div>
<div style="left:1127.9px;top:127.9px;width:1.3px;height:1.3px;background:#4a4a4a;"></div>
<div style="left:1133.9px;top:127.9px;width:1.3px;height:1.3px;background:#4a4a4a;"></div>
<span class="t" style="left:1140.4px;top:123.05px;font-size:10px;line-height:11px;height:11px;color:#2a2a2a;transform:scaleX(1.0069);">10</span>
<div style="left:1156.9px;top:127.9px;width:1.3px;height:1.3px;background:#4a4a4a;"></div>
<div style="left:1162.9px;top:127.9px;width:1.3px;height:1.3px;background:#4a4a4a;"></div>
<div style="left:1168.9px;top:127.9px;width:1.3px;height:1.3px;background:#4a4a4a;"></div>
<div style="left:1173.9px;top:126.3px;width:1.3px;height:4.4px;background:#4a4a4a;"></div>
<div style="left:1179.9px;top:127.9px;width:1.3px;height:1.3px;background:#4a4a4a;"></div>
<div style="left:1185.9px;top:127.9px;width:1.3px;height:1.3px;background:#4a4a4a;"></div>
<div style="left:1191.9px;top:127.9px;width:1.3px;height:1.3px;background:#4a4a4a;"></div>
<span class="t" style="left:1198.0px;top:123.05px;font-size:10px;line-height:11px;height:11px;color:#2a2a2a;transform:scaleX(1.0789);">11</span>
<div style="left:1214.9px;top:127.9px;width:1.3px;height:1.3px;background:#4a4a4a;"></div>
<div style="left:1219.9px;top:127.9px;width:1.3px;height:1.3px;background:#4a4a4a;"></div>
<div style="left:1225.9px;top:127.9px;width:1.3px;height:1.3px;background:#4a4a4a;"></div>
<div style="left:1231.9px;top:126.3px;width:1.3px;height:4.4px;background:#4a4a4a;"></div>
<div style="left:1237.9px;top:127.9px;width:1.3px;height:1.3px;background:#4a4a4a;"></div>
<div style="left:1242.9px;top:127.9px;width:1.3px;height:1.3px;background:#4a4a4a;"></div>
<div style="left:1248.9px;top:127.9px;width:1.3px;height:1.3px;background:#4a4a4a;"></div>
<span class="t" style="left:1255.6000000000001px;top:123.05px;font-size:10px;line-height:11px;height:11px;color:#2a2a2a;transform:scaleX(1.0069);">12</span>
<div style="left:1271.9px;top:127.9px;width:1.3px;height:1.3px;background:#4a4a4a;"></div>
<div style="left:1277.9px;top:127.9px;width:1.3px;height:1.3px;background:#4a4a4a;"></div>
<div style="left:1283.9px;top:127.9px;width:1.3px;height:1.3px;background:#4a4a4a;"></div>
<div style="left:1289.9px;top:126.3px;width:1.3px;height:4.4px;background:#4a4a4a;"></div>
<div style="left:1294.9px;top:127.9px;width:1.3px;height:1.3px;background:#4a4a4a;"></div>
<div style="left:1300.9px;top:127.9px;width:1.3px;height:1.3px;background:#4a4a4a;"></div>
<div style="left:1306.9px;top:127.9px;width:1.3px;height:1.3px;background:#4a4a4a;"></div>
<span class="t" style="left:1313.2px;top:123.05px;font-size:10px;line-height:11px;height:11px;color:#2a2a2a;transform:scaleX(1.0069);">13</span>
<div style="left:1329.9px;top:127.9px;width:1.3px;height:1.3px;background:#4a4a4a;"></div>
<div style="left:1335.9px;top:127.9px;width:1.3px;height:1.3px;background:#4a4a4a;"></div>
<div style="left:1340.9px;top:127.9px;width:1.3px;height:1.3px;background:#4a4a4a;"></div>
<div style="left:1346.9px;top:126.3px;width:1.3px;height:4.4px;background:#4a4a4a;"></div>
<div style="left:1352.9px;top:127.9px;width:1.3px;height:1.3px;background:#4a4a4a;"></div>
<div style="left:1358.9px;top:127.9px;width:1.3px;height:1.3px;background:#4a4a4a;"></div>
<div style="left:1363.9px;top:127.9px;width:1.3px;height:1.3px;background:#4a4a4a;"></div>
<span class="t" style="left:1370.8000000000002px;top:123.05px;font-size:10px;line-height:11px;height:11px;color:#2a2a2a;transform:scaleX(1.0069);">14</span>
<div style="left:1386.9px;top:127.9px;width:1.3px;height:1.3px;background:#4a4a4a;"></div>
<div style="left:1392.9px;top:127.9px;width:1.3px;height:1.3px;background:#4a4a4a;"></div>
<div style="left:1398.9px;top:127.9px;width:1.3px;height:1.3px;background:#4a4a4a;"></div>
<div style="left:1404.9px;top:126.3px;width:1.3px;height:4.4px;background:#4a4a4a;"></div>
<div style="left:1409.9px;top:127.9px;width:1.3px;height:1.3px;background:#4a4a4a;"></div>
<div style="left:1415.9px;top:127.9px;width:1.3px;height:1.3px;background:#4a4a4a;"></div>
<div style="left:1421.9px;top:127.9px;width:1.3px;height:1.3px;background:#4a4a4a;"></div>
<div style="left:1428.4px;top:123px;width:7.6px;height:12px;overflow:hidden"><span class="t" style="left:0;top:-0.5px;font-size:10px;line-height:12px;color:#2a2a2a;transform:scaleX(1.007)">15</span></div>
<div style="left:532px;top:135px;width:12.8px;height:802px;background:#c0c0c0;"></div>
<div style="left:532px;top:135px;width:12.8px;height:1px;background:#b2b2b2;"></div>
<div style="left:545px;top:123px;width:1.2px;height:11.5px;background:#adadad;"></div>
<div style="left:532px;top:229.6px;width:12.8px;height:27.4px;background:#fff;"></div>
<span class="t" style="left:543.2px;top:231.0px;font-size:10px;line-height:10px;color:#2a2a2a;transform-origin:0 0;transform:rotate(-90deg) translate(-2.8px,-5.5px) scaleX(1.007)">0</span>
<div style="left:537.5px;top:235.9px;width:1.3px;height:1.3px;background:#4a4a4a;"></div>
<div style="left:537.5px;top:240.9px;width:1.3px;height:1.3px;background:#4a4a4a;"></div>
<div style="left:537.5px;top:246.9px;width:1.3px;height:1.3px;background:#4a4a4a;"></div>
<div style="left:537.5px;top:252.9px;width:1.3px;height:1.3px;background:#4a4a4a;"></div>
<div style="left:535.8px;top:258.9px;width:4.6px;height:1.3px;background:#4a4a4a;"></div>
<div style="left:537.5px;top:263.9px;width:1.3px;height:1.3px;background:#4a4a4a;"></div>
<div style="left:537.5px;top:269.9px;width:1.3px;height:1.3px;background:#4a4a4a;"></div>
<div style="left:537.5px;top:275.9px;width:1.3px;height:1.3px;background:#4a4a4a;"></div>
<div style="left:537.5px;top:281.9px;width:1.3px;height:1.3px;background:#4a4a4a;"></div>
<span class="t" style="left:543.2px;top:288.6px;font-size:10px;line-height:10px;color:#2a2a2a;transform-origin:0 0;transform:rotate(-90deg) translate(-2.8px,-5.5px) scaleX(1.007)">1</span>
<div style="left:537.5px;top:292.9px;width:1.3px;height:1.3px;background:#4a4a4a;"></div>
<div style="left:537.5px;top:298.9px;width:1.3px;height:1.3px;background:#4a4a4a;"></div>
<div style="left:537.5px;top:304.9px;width:1.3px;height:1.3px;background:#4a4a4a;"></div>
<div style="left:537.5px;top:310.9px;width:1.3px;height:1.3px;background:#4a4a4a;"></div>
<div style="left:535.8px;top:315.9px;width:4.6px;height:1.3px;background:#4a4a4a;"></div>
<div style="left:537.5px;top:321.9px;width:1.3px;height:1.3px;background:#4a4a4a;"></div>
<div style="left:537.5px;top:327.9px;width:1.3px;height:1.3px;background:#4a4a4a;"></div>
<div style="left:537.5px;top:333.9px;width:1.3px;height:1.3px;background:#4a4a4a;"></div>
<div style="left:537.5px;top:338.9px;width:1.3px;height:1.3px;background:#4a4a4a;"></div>
<span class="t" style="left:543.2px;top:346.2px;font-size:10px;line-height:10px;color:#2a2a2a;transform-origin:0 0;transform:rotate(-90deg) translate(-2.8px,-5.5px) scaleX(1.007)">2</span>
<div style="left:537.5px;top:350.9px;width:1.3px;height:1.3px;background:#4a4a4a;"></div>
<div style="left:537.5px;top:356.9px;width:1.3px;height:1.3px;background:#4a4a4a;"></div>
<div style="left:537.5px;top:361.9px;width:1.3px;height:1.3px;background:#4a4a4a;"></div>
<div style="left:537.5px;top:367.9px;width:1.3px;height:1.3px;background:#4a4a4a;"></div>
<div style="left:535.8px;top:373.9px;width:4.6px;height:1.3px;background:#4a4a4a;"></div>
<div style="left:537.5px;top:379.9px;width:1.3px;height:1.3px;background:#4a4a4a;"></div>
<div style="left:537.5px;top:384.9px;width:1.3px;height:1.3px;background:#4a4a4a;"></div>
<div style="left:537.5px;top:390.9px;width:1.3px;height:1.3px;background:#4a4a4a;"></div>
<div style="left:537.5px;top:396.9px;width:1.3px;height:1.3px;background:#4a4a4a;"></div>
<span class="t" style="left:543.2px;top:403.8px;font-size:10px;line-height:10px;color:#2a2a2a;transform-origin:0 0;transform:rotate(-90deg) translate(-2.8px,-5.5px) scaleX(1.007)">3</span>
<div style="left:537.5px;top:407.9px;width:1.3px;height:1.3px;background:#4a4a4a;"></div>
<div style="left:537.5px;top:413.9px;width:1.3px;height:1.3px;background:#4a4a4a;"></div>
<div style="left:537.5px;top:419.9px;width:1.3px;height:1.3px;background:#4a4a4a;"></div>
<div style="left:537.5px;top:425.9px;width:1.3px;height:1.3px;background:#4a4a4a;"></div>
<div style="left:535.8px;top:431.9px;width:4.6px;height:1.3px;background:#4a4a4a;"></div>
<div style="left:537.5px;top:436.9px;width:1.3px;height:1.3px;background:#4a4a4a;"></div>
<div style="left:537.5px;top:442.9px;width:1.3px;height:1.3px;background:#4a4a4a;"></div>
<div style="left:537.5px;top:448.9px;width:1.3px;height:1.3px;background:#4a4a4a;"></div>
<div style="left:537.5px;top:454.9px;width:1.3px;height:1.3px;background:#4a4a4a;"></div>
<span class="t" style="left:543.2px;top:461.4px;font-size:10px;line-height:10px;color:#2a2a2a;transform-origin:0 0;transform:rotate(-90deg) translate(-2.8px,-5.5px) scaleX(1.007)">4</span>
<div style="left:537.5px;top:465.9px;width:1.3px;height:1.3px;background:#4a4a4a;"></div>
<div style="left:537.5px;top:471.9px;width:1.3px;height:1.3px;background:#4a4a4a;"></div>
<div style="left:537.5px;top:477.9px;width:1.3px;height:1.3px;background:#4a4a4a;"></div>
<div style="left:537.5px;top:482.9px;width:1.3px;height:1.3px;background:#4a4a4a;"></div>
<div style="left:535.8px;top:488.9px;width:4.6px;height:1.3px;background:#4a4a4a;"></div>
<div style="left:537.5px;top:494.9px;width:1.3px;height:1.3px;background:#4a4a4a;"></div>
<div style="left:537.5px;top:500.9px;width:1.3px;height:1.3px;background:#4a4a4a;"></div>
<div style="left:537.5px;top:505.9px;width:1.3px;height:1.3px;background:#4a4a4a;"></div>
<div style="left:537.5px;top:511.9px;width:1.3px;height:1.3px;background:#4a4a4a;"></div>
<span class="t" style="left:543.2px;top:519.0px;font-size:10px;line-height:10px;color:#2a2a2a;transform-origin:0 0;transform:rotate(-90deg) translate(-2.8px,-5.5px) scaleX(1.007)">5</span>
<div style="left:537.5px;top:523.9px;width:1.3px;height:1.3px;background:#4a4a4a;"></div>
<div style="left:537.5px;top:528.9px;width:1.3px;height:1.3px;background:#4a4a4a;"></div>
<div style="left:537.5px;top:534.9px;width:1.3px;height:1.3px;background:#4a4a4a;"></div>
<div style="left:537.5px;top:540.9px;width:1.3px;height:1.3px;background:#4a4a4a;"></div>
<div style="left:535.8px;top:546.9px;width:4.6px;height:1.3px;background:#4a4a4a;"></div>
<div style="left:537.5px;top:551.9px;width:1.3px;height:1.3px;background:#4a4a4a;"></div>
<div style="left:537.5px;top:557.9px;width:1.3px;height:1.3px;background:#4a4a4a;"></div>
<div style="left:537.5px;top:563.9px;width:1.3px;height:1.3px;background:#4a4a4a;"></div>
<div style="left:537.5px;top:569.9px;width:1.3px;height:1.3px;background:#4a4a4a;"></div>
<span class="t" style="left:543.2px;top:576.6px;font-size:10px;line-height:10px;color:#2a2a2a;transform-origin:0 0;transform:rotate(-90deg) translate(-2.8px,-5.5px) scaleX(1.007)">6</span>
<div style="left:537.5px;top:580.9px;width:1.3px;height:1.3px;background:#4a4a4a;"></div>
<div style="left:537.5px;top:586.9px;width:1.3px;height:1.3px;background:#4a4a4a;"></div>
<div style="left:537.5px;top:592.9px;width:1.3px;height:1.3px;background:#4a4a4a;"></div>
<div style="left:537.5px;top:598.9px;width:1.3px;height:1.3px;background:#4a4a4a;"></div>
<div style="left:535.8px;top:603.9px;width:4.6px;height:1.3px;background:#4a4a4a;"></div>
<div style="left:537.5px;top:609.9px;width:1.3px;height:1.3px;background:#4a4a4a;"></div>
<div style="left:537.5px;top:615.9px;width:1.3px;height:1.3px;background:#4a4a4a;"></div>
<div style="left:537.5px;top:621.9px;width:1.3px;height:1.3px;background:#4a4a4a;"></div>
<div style="left:537.5px;top:626.9px;width:1.3px;height:1.3px;background:#4a4a4a;"></div>
<span class="t" style="left:543.2px;top:634.2px;font-size:10px;line-height:10px;color:#2a2a2a;transform-origin:0 0;transform:rotate(-90deg) translate(-2.8px,-5.5px) scaleX(1.007)">7</span>
<div style="left:537.5px;top:638.9px;width:1.3px;height:1.3px;background:#4a4a4a;"></div>
<div style="left:537.5px;top:644.9px;width:1.3px;height:1.3px;background:#4a4a4a;"></div>
<div style="left:537.5px;top:649.9px;width:1.3px;height:1.3px;background:#4a4a4a;"></div>
<div style="left:537.5px;top:655.9px;width:1.3px;height:1.3px;background:#4a4a4a;"></div>
<div style="left:535.8px;top:661.9px;width:4.6px;height:1.3px;background:#4a4a4a;"></div>
<div style="left:537.5px;top:667.9px;width:1.3px;height:1.3px;background:#4a4a4a;"></div>
<div style="left:537.5px;top:672.9px;width:1.3px;height:1.3px;background:#4a4a4a;"></div>
<div style="left:537.5px;top:678.9px;width:1.3px;height:1.3px;background:#4a4a4a;"></div>
<div style="left:537.5px;top:684.9px;width:1.3px;height:1.3px;background:#4a4a4a;"></div>
<span class="t" style="left:543.2px;top:691.8px;font-size:10px;line-height:10px;color:#2a2a2a;transform-origin:0 0;transform:rotate(-90deg) translate(-2.8px,-5.5px) scaleX(1.007)">8</span>
<div style="left:537.5px;top:695.9px;width:1.3px;height:1.3px;background:#4a4a4a;"></div>
<div style="left:537.5px;top:701.9px;width:1.3px;height:1.3px;background:#4a4a4a;"></div>
<div style="left:537.5px;top:707.9px;width:1.3px;height:1.3px;background:#4a4a4a;"></div>
<div style="left:537.5px;top:713.9px;width:1.3px;height:1.3px;background:#4a4a4a;"></div>
<div style="left:535.8px;top:719.9px;width:4.6px;height:1.3px;background:#4a4a4a;"></div>
<div style="left:537.5px;top:724.9px;width:1.3px;height:1.3px;background:#4a4a4a;"></div>
<div style="left:537.5px;top:730.9px;width:1.3px;height:1.3px;background:#4a4a4a;"></div>
<div style="left:537.5px;top:736.9px;width:1.3px;height:1.3px;background:#4a4a4a;"></div>
<div style="left:537.5px;top:742.9px;width:1.3px;height:1.3px;background:#4a4a4a;"></div>
<span class="t" style="left:543.2px;top:749.4px;font-size:10px;line-height:10px;color:#2a2a2a;transform-origin:0 0;transform:rotate(-90deg) translate(-2.8px,-5.5px) scaleX(1.007)">9</span>
<div style="left:537.5px;top:753.9px;width:1.3px;height:1.3px;background:#4a4a4a;"></div>
<div style="left:537.5px;top:759.9px;width:1.3px;height:1.3px;background:#4a4a4a;"></div>
<div style="left:537.5px;top:765.9px;width:1.3px;height:1.3px;background:#4a4a4a;"></div>
<div style="left:537.5px;top:770.9px;width:1.3px;height:1.3px;background:#4a4a4a;"></div>
<div style="left:535.8px;top:776.9px;width:4.6px;height:1.3px;background:#4a4a4a;"></div>
<div style="left:537.5px;top:782.9px;width:1.3px;height:1.3px;background:#4a4a4a;"></div>
<div style="left:537.5px;top:788.9px;width:1.3px;height:1.3px;background:#4a4a4a;"></div>
<div style="left:537.5px;top:793.9px;width:1.3px;height:1.3px;background:#4a4a4a;"></div>
<span class="t" style="left:543.2px;top:807.0px;font-size:10px;line-height:10px;color:#2a2a2a;transform-origin:0 0;transform:rotate(-90deg) translate(-5.6px,-5.5px) scaleX(1.007)">10</span>
<div style="left:537.5px;top:816.9px;width:1.3px;height:1.3px;background:#4a4a4a;"></div>
<div style="left:537.5px;top:822.9px;width:1.3px;height:1.3px;background:#4a4a4a;"></div>
<div style="left:537.5px;top:828.9px;width:1.3px;height:1.3px;background:#4a4a4a;"></div>
<div style="left:535.8px;top:834.9px;width:4.6px;height:1.3px;background:#4a4a4a;"></div>
<div style="left:537.5px;top:839.9px;width:1.3px;height:1.3px;background:#4a4a4a;"></div>
<div style="left:537.5px;top:845.9px;width:1.3px;height:1.3px;background:#4a4a4a;"></div>
<div style="left:537.5px;top:851.9px;width:1.3px;height:1.3px;background:#4a4a4a;"></div>
<span class="t" style="left:543.2px;top:864.6px;font-size:10px;line-height:10px;color:#2a2a2a;transform-origin:0 0;transform:rotate(-90deg) translate(-5.6px,-5.5px) scaleX(1.079)">11</span>
<div style="left:537.5px;top:874.9px;width:1.3px;height:1.3px;background:#4a4a4a;"></div>
<div style="left:537.5px;top:880.9px;width:1.3px;height:1.3px;background:#4a4a4a;"></div>
<div style="left:537.5px;top:886.9px;width:1.3px;height:1.3px;background:#4a4a4a;"></div>
<div style="left:535.8px;top:891.9px;width:4.6px;height:1.3px;background:#4a4a4a;"></div>
<div style="left:537.5px;top:897.9px;width:1.3px;height:1.3px;background:#4a4a4a;"></div>
<div style="left:537.5px;top:903.9px;width:1.3px;height:1.3px;background:#4a4a4a;"></div>
<div style="left:537.5px;top:909.9px;width:1.3px;height:1.3px;background:#4a4a4a;"></div>
<span class="t" style="left:543.2px;top:922.2px;font-size:10px;line-height:10px;color:#2a2a2a;transform-origin:0 0;transform:rotate(-90deg) translate(-5.6px,-5.5px) scaleX(1.007)">12</span>
<div style="left:537.5px;top:932.9px;width:1.3px;height:1.3px;background:#4a4a4a;"></div>
<div style="left:544.8px;top:135px;width:892.2px;height:802px;background:#f0f0f0;"></div>
<div style="left:532px;top:937px;width:1004px;height:20px;background:#f4f5fb;"></div>
<div style="left:575px;top:937px;width:961px;height:1px;background:#a9a9a9;"></div>
<div style="left:532px;top:937px;width:43px;height:20px;background:#f6f7fc;border-right:1px solid #9a9a9a;border-bottom:1px solid #9a9a9a;box-sizing:border-box;"></div>
<div style="left:617px;top:938px;width:1px;height:19px;background:#a9a9a9;"></div>
<div style="left:664px;top:938px;width:1px;height:19px;background:#a9a9a9;"></div>
<span class="t" style="left:535.5px;top:940.07px;font-size:12px;line-height:14px;height:14px;color:#000;transform:scaleX(0.9691);">Design</span>
<span class="t" style="left:578.5px;top:940.07px;font-size:12px;line-height:14px;height:14px;color:#000;transform:scaleX(0.9337);">Source</span>
<span class="t" style="left:621px;top:940.07px;font-size:12px;line-height:14px;height:14px;color:#000;transform:scaleX(0.9442);">Preview</span>
<div style="left:545px;top:135px;width:892px;height:802px;overflow:hidden">
<div style="left:8px;top:9px;width:478px;height:231px;background:#fff;box-shadow:0 0 4px 1.5px rgba(0,0,0,.30), 2px 2px 4px 0.5px rgba(0,0,0,.22);"></div>
<svg style="left:8px;top:9px;" width="478" height="231" viewBox="0 0 478 231"><path d="M8.5 0 V231" stroke="#f8f8f8" stroke-width="1"/><path d="M16.5 0 V231" stroke="#f8f8f8" stroke-width="1"/><path d="M24.5 0 V231" stroke="#f8f8f8" stroke-width="1"/><path d="M32.5 0 V231" stroke="#f8f8f8" stroke-width="1"/><path d="M40.5 0 V231" stroke="#f8f8f8" stroke-width="1"/><path d="M48.5 0 V231" stroke="#f8f8f8" stroke-width="1"/><path d="M56.5 0 V231" stroke="#f8f8f8" stroke-width="1"/><path d="M64.5 0 V231" stroke="#f8f8f8" stroke-width="1"/><path d="M72.5 0 V231" stroke="#f8f8f8" stroke-width="1"/><path d="M80.5 0 V231" stroke="#ebebeb" stroke-width="1"/><path d="M88.5 0 V231" stroke="#f8f8f8" stroke-width="1"/><path d="M96.5 0 V231" stroke="#f8f8f8" stroke-width="1"/><path d="M104.5 0 V231" stroke="#f8f8f8" stroke-width="1"/><path d="M112.5 0 V231" stroke="#f8f8f8" stroke-width="1"/><path d="M120.5 0 V231" stroke="#f8f8f8" stroke-width="1"/><path d="M128.5 0 V231" stroke="#f8f8f8" stroke-width="1"/><path d="M136.5 0 V231" stroke="#f8f8f8" stroke-width="1"/><path d="M144.5 0 V231" stroke="#f8f8f8" stroke-width="1"/><path d="M152.5 0 V231" stroke="#f8f8f8" stroke-width="1"/><path d="M160.5 0 V231" stroke="#ebebeb" stroke-width="1"/><path d="M168.5 0 V231" stroke="#f8f8f8" stroke-width="1"/><path d="M176.5 0 V231" stroke="#f8f8f8" stroke-width="1"/><path d="M184.5 0 V231" stroke="#f8f8f8" stroke-width="1"/><path d="M192.5 0 V231" stroke="#f8f8f8" stroke-width="1"/><path d="M200.5 0 V231" stroke="#f8f8f8" stroke-width="1"/><path d="M208.5 0 V231" stroke="#f8f8f8" stroke-width="1"/><path d="M216.5 0 V231" stroke="#f8f8f8" stroke-width="1"/><path d="M224.5 0 V231" stroke="#f8f8f8" stroke-width="1"/><path d="M232.5 0 V231" stroke="#f8f8f8" stroke-width="1"/><path d="M240.5 0 V231" stroke="#ebebeb" stroke-width="1"/><path d="M248.5 0 V231" stroke="#f8f8f8" stroke-width="1"/><path d="M256.5 0 V231" stroke="#f8f8f8" stroke-width="1"/><path d="M264.5 0 V231" stroke="#f8f8f8" stroke-width="1"/><path d="M272.5 0 V231" stroke="#f8f8f8" stroke-width="1"/><path d="M280.5 0 V231" stroke="#f8f8f8" stroke-width="1"/><path d="M288.5 0 V231" stroke="#f8f8f8" stroke-width="1"/><path d="M296.5 0 V231" stroke="#f8f8f8" stroke-width="1"/><path d="M304.5 0 V231" stroke="#f8f8f8" stroke-width="1"/><path d="M312.5 0 V231" stroke="#f8f8f8" stroke-width="1"/><path d="M320.5 0 V231" stroke="#ebebeb" stroke-width="1"/><path d="M328.5 0 V231" stroke="#f8f8f8" stroke-width="1"/><path d="M336.5 0 V231" stroke="#f8f8f8" stroke-width="1"/><path d="M344.5 0 V231" stroke="#f8f8f8" stroke-width="1"/><path d="M352.5 0 V231" stroke="#f8f8f8" stroke-width="1"/><path d="M360.5 0 V231" stroke="#f8f8f8" stroke-width="1"/><path d="M368.5 0 V231" stroke="#f8f8f8" stroke-width="1"/><path d="M376.5 0 V231" stroke="#f8f8f8" stroke-width="1"/><path d="M384.5 0 V231" stroke="#f8f8f8" stroke-width="1"/><path d="M392.5 0 V231" stroke="#f8f8f8" stroke-width="1"/><path d="M400.5 0 V231" stroke="#ebebeb" stroke-width="1"/><path d="M408.5 0 V231" stroke="#f8f8f8" stroke-width="1"/><path d="M416.5 0 V231" stroke="#f8f8f8" stroke-width="1"/><path d="M424.5 0 V231" stroke="#f8f8f8" stroke-width="1"/><path d="M432.5 0 V231" stroke="#f8f8f8" stroke-width="1"/><path d="M440.5 0 V231" stroke="#f8f8f8" stroke-width="1"/><path d="M448.5 0 V231" stroke="#f8f8f8" stroke-width="1"/><path d="M456.5 0 V231" stroke="#f8f8f8" stroke-width="1"/><path d="M464.5 0 V231" stroke="#f8f8f8" stroke-width="1"/><path d="M472.5 0 V231" stroke="#f8f8f8" stroke-width="1"/><path d="M0 8.5 H478" stroke="#f8f8f8" stroke-width="1"/><path d="M0 16.5 H478" stroke="#f8f8f8" stroke-width="1"/><path d="M0 24.5 H478" stroke="#f8f8f8" stroke-width="1"/><path d="M0 32.5 H478" stroke="#f8f8f8" stroke-width="1"/><path d="M0 40.5 H478" stroke="#f8f8f8" stroke-width="1"/><path d="M0 48.5 H478" stroke="#f8f8f8" stroke-width="1"/><path d="M0 56.5 H478" stroke="#f8f8f8" stroke-width="1"/><path d="M0 64.5 H478" stroke="#f8f8f8" stroke-width="1"/><path d="M0 72.5 H478" stroke="#f8f8f8" stroke-width="1"/><path d="M0 80.5 H478" stroke="#ebebeb" stroke-width="1"/><path d="M0 88.5 H478" stroke="#f8f8f8" stroke-width="1"/><path d="M0 96.5 H478" stroke="#f8f8f8" stroke-width="1"/><path d="M0 104.5 H478" stroke="#f8f8f8" stroke-width="1"/><path d="M0 112.5 H478" stroke="#f8f8f8" stroke-width="1"/><path d="M0 120.5 H478" stroke="#f8f8f8" stroke-width="1"/><path d="M0 128.5 H478" stroke="#f8f8f8" stroke-width="1"/><path d="M0 136.5 H478" stroke="#f8f8f8" stroke-width="1"/><path d="M0 144.5 H478" stroke="#f8f8f8" stroke-width="1"/><path d="M0 152.5 H478" stroke="#f8f8f8" stroke-width="1"/><path d="M0 160.5 H478" stroke="#ebebeb" stroke-width="1"/><path d="M0 168.5 H478" stroke="#f8f8f8" stroke-width="1"/><path d="M0 176.5 H478" stroke="#f8f8f8" stroke-width="1"/><path d="M0 184.5 H478" stroke="#f8f8f8" stroke-width="1"/><path d="M0 192.5 H478" stroke="#f8f8f8" stroke-width="1"/><path d="M0 200.5 H478" stroke="#f8f8f8" stroke-width="1"/><path d="M0 208.5 H478" stroke="#f8f8f8" stroke-width="1"/><path d="M0 216.5 H478" stroke="#f8f8f8" stroke-width="1"/><path d="M0 224.5 H478" stroke="#f8f8f8" stroke-width="1"/><path d="M0 16.5 H478" stroke="#d2d2f8" stroke-width="1"/><path d="M0 59.5 H478" stroke="#d2d2f8" stroke-width="1"/><path d="M0 86.5 H478" stroke="#d2d2f8" stroke-width="1"/><path d="M0 112.5 H478" stroke="#d2d2f8" stroke-width="1"/><path d="M0 125.5 H478" stroke="#d2d2f8" stroke-width="1"/><path d="M0 214.5 H478" stroke="#d2d2f8" stroke-width="1"/><path d="M17.5 0 V231" stroke="#d2d2f8" stroke-width="1"/><path d="M461.5 0 V231" stroke="#d2d2f8" stroke-width="1"/></svg>
<span class="t" style="left:235.5px;top:40.26px;font-size:12.5px;line-height:14px;height:14px;color:#cfcfcf;transform:scaleX(0.9287);">Title</span>
<span class="t" style="left:226px;top:76.36px;font-size:12.5px;line-height:14px;height:14px;color:#cfcfcf;transform:scaleX(0.9909);">Detail 1</span>
<span class="t" style="left:226px;top:105.06px;font-size:12.5px;line-height:14px;height:14px;color:#cfcfcf;transform:scaleX(0.9909);">Detail 2</span>
<span class="t" style="left:220.6px;top:174.06px;font-size:12.5px;line-height:14px;height:14px;color:#cfcfcf;transform:scaleX(0.9630);">Summary</span>
<div style="left:25px;top:29px;width:52px;height:13px;border:1px solid #d2d2d2;box-sizing:border-box;"></div>
<div style="left:77px;top:29px;width:338px;height:13px;border:1px solid #d2d2d2;box-sizing:border-box;"></div>
<div style="left:425px;top:29px;width:30px;height:13px;border:1px solid #d2d2d2;box-sizing:border-box;"></div>
<div style="left:454px;top:29px;width:16px;height:13px;border:1px solid #d2d2d2;box-sizing:border-box;"></div>
<div style="left:25px;top:41px;width:445px;height:17px;border:1px solid #d2d2d2;box-sizing:border-box;"></div>
<div style="left:25px;top:57px;width:445px;height:12px;border:1px solid #d2d2d2;box-sizing:border-box;"></div>
<span class="t" style="left:26.5px;top:30.75px;font-size:7px;line-height:7px;height:7px;color:#222;font-weight:bold;transform:scaleX(1.0283);">new</span>
<span class="t" style="left:172px;top:27.83px;font-size:8.6px;line-height:10px;height:10px;color:#333;text-decoration:underline;transform:scaleX(1.0947);">$P{context}.getLibrary().getName()</span>
<span class="t" style="left:426px;top:30.55px;font-size:7px;line-height:7px;height:7px;color:#222;font-weight:bold;transform:scaleX(1.1095);">$P</span>
<span class="t" style="left:454.8px;top:30.55px;font-size:7px;line-height:7px;height:7px;color:#222;font-weight:bold;transform:scaleX(1.1095);">$V</span>
<span class="t" style="left:176px;top:44.98px;font-size:11.2px;line-height:12px;height:12px;color:#111;font-weight:bold;text-decoration:underline;transform:scaleX(1.2539);">$P{context}.translate</span>
<span class="t" style="left:113px;top:57.01px;font-size:6.6px;line-height:7px;height:7px;color:#444;transform:scaleX(1.1509);">$P{context}.translate(&quot;Department&quot;)+&quot;: &quot;+$P{context}.getDepartmentsAsString()</span>
<div style="left:25px;top:68.6px;width:444.5px;height:1.6px;background:#3a3a3a;"></div>
<div style="left:36px;top:71px;width:82px;height:13px;border:1px solid #e4e4e4;box-sizing:border-box;"></div>
<div style="left:152px;top:71px;width:82px;height:13px;border:1px solid #e4e4e4;box-sizing:border-box;"></div>
<div style="left:294px;top:71px;width:115px;height:13px;border:1px solid #e4e4e4;box-sizing:border-box;"></div>
<div style="left:48px;top:83px;width:302px;height:12px;border:1px solid #e4e4e4;box-sizing:border-box;"></div>
<div style="left:367px;top:83px;width:103px;height:12px;border:1px solid #e4e4e4;box-sizing:border-box;"></div>
<span class="t" style="left:36.8px;top:71.34px;font-size:8.9px;line-height:10px;height:10px;color:#3c3c3c;transform:scaleX(1.0085);">$F{_THIS}.</span>
<span class="t" style="left:152.9px;top:71.34px;font-size:8.9px;line-height:10px;height:10px;color:#3c3c3c;transform:scaleX(1.0085);">$F{_THIS}.</span>
<span class="t" style="left:294.6px;top:71.34px;font-size:8.9px;line-height:10px;height:10px;color:#3c3c3c;transform:scaleX(1.0085);">$F{_THIS}.</span>
<span class="t" style="left:48.2px;top:83.04px;font-size:8.9px;line-height:10px;height:10px;color:#3c3c3c;">$F{_THIS}.getAddress()</span>
<span class="t" style="left:367.4px;top:83.04px;font-size:8.9px;line-height:10px;height:10px;color:#3c3c3c;transform:scaleX(1.0065);">$F{_THIS}.getReader().</span>
<span class="t" style="left:25px;top:98.12px;font-size:7.2px;line-height:9px;height:9px;color:#3c3c3c;transform:scaleX(0.9770);">$F{_THIS}.</span>
<span class="t" style="left:96.8px;top:98.12px;font-size:7.2px;line-height:9px;height:9px;color:#3c3c3c;transform:scaleX(1.0207);">$F{_THIS}.getDepartmentName() +</span>
<span class="t" style="left:433px;top:97.82px;font-size:7.2px;line-height:9px;height:9px;color:#3c3c3c;transform:scaleX(0.9686);">$F{_THIS}.</span>
<span class="t" style="left:32.8px;top:109.24px;font-size:8.9px;line-height:10px;height:10px;color:#3c3c3c;transform:scaleX(0.9677);">new</span>
<span class="t" style="left:86.8px;top:109.24px;font-size:8.9px;line-height:10px;height:10px;color:#3c3c3c;transform:scaleX(0.9948);">$F{_THIS}.</span>
<span class="t" style="left:152.4px;top:109.24px;font-size:8.9px;line-height:10px;height:10px;color:#3c3c3c;transform:scaleX(0.8665);">$F</span>
<span class="t" style="left:177.8px;top:109.24px;font-size:8.9px;line-height:10px;height:10px;color:#3c3c3c;transform:scaleX(1.0352);">$F{_THIS}.getItem().</span>
<span class="t" style="left:287.3px;top:109.24px;font-size:8.9px;line-height:10px;height:10px;color:#3c3c3c;transform:scaleX(1.0230);">$F{_THIS}.getItem().</span>
<span class="t" style="left:416px;top:109.24px;font-size:8.9px;line-height:10px;height:10px;color:#3c3c3c;transform:scaleX(1.0792);">$P{context}.</span>
<svg style="left:24.5px;top:94.30000000000001px;" width="445" height="28" viewBox="0 0 445 28"><path d="M0 1 H445" stroke="#1a1a1a" stroke-width="2" stroke-dasharray="9.5 1"/><path d="M0 27 H445" stroke="#1a1a1a" stroke-width="2" stroke-dasharray="9.5 1"/><path d="M0 13.2 H445" stroke="#4a4a4a" stroke-width="1" stroke-dasharray="4 2.2"/><path d="M.5 1 V27 M444.5 1 V27" stroke="#2a2a2a" stroke-width="1.3"/></svg>
<div style="left:21.2px;top:91.8px;width:7px;height:7px;background:linear-gradient(135deg,#4f8cc4,#1f5896);border:1px solid #1c4676;box-sizing:border-box;box-shadow:0 0 1.5px rgba(0,0,40,.45);"></div>
<div style="left:21.2px;top:117.7px;width:7px;height:7px;background:linear-gradient(135deg,#4f8cc4,#1f5896);border:1px solid #1c4676;box-sizing:border-box;box-shadow:0 0 1.5px rgba(0,0,40,.45);"></div>
<div style="left:243.3px;top:91.8px;width:7px;height:7px;background:linear-gradient(135deg,#4f8cc4,#1f5896);border:1px solid #1c4676;box-sizing:border-box;box-shadow:0 0 1.5px rgba(0,0,40,.45);"></div>
<div style="left:243.3px;top:117.7px;width:7px;height:7px;background:linear-gradient(135deg,#4f8cc4,#1f5896);border:1px solid #1c4676;box-sizing:border-box;box-shadow:0 0 1.5px rgba(0,0,40,.45);"></div>
<div style="left:465.5px;top:91.8px;width:7px;height:7px;background:linear-gradient(135deg,#4f8cc4,#1f5896);border:1px solid #1c4676;box-sizing:border-box;box-shadow:0 0 1.5px rgba(0,0,40,.45);"></div>
<div style="left:465.5px;top:117.7px;width:7px;height:7px;background:linear-gradient(135deg,#4f8cc4,#1f5896);border:1px solid #1c4676;box-sizing:border-box;box-shadow:0 0 1.5px rgba(0,0,40,.45);"></div>
<div style="left:21.2px;top:104.7px;width:7px;height:7px;background:linear-gradient(135deg,#4f8cc4,#1f5896);border:1px solid #1c4676;box-sizing:border-box;box-shadow:0 0 1.5px rgba(0,0,40,.45);"></div>
<div style="left:465.5px;top:104.7px;width:7px;height:7px;background:linear-gradient(135deg,#4f8cc4,#1f5896);border:1px solid #1c4676;box-sizing:border-box;box-shadow:0 0 1.5px rgba(0,0,40,.45);"></div>
<span class="t" style="left:25px;top:124.02px;font-size:7.2px;line-height:9px;height:9px;color:#3c3c3c;transform:scaleX(1.0610);">$P{context}.translate</span>
<span class="t" style="left:97px;top:124.02px;font-size:7.2px;line-height:9px;height:9px;color:#3c3c3c;transform:scaleX(1.0565);">$P{context}.translate</span>
<span class="t" style="left:280.6px;top:124.02px;font-size:7.2px;line-height:9px;height:9px;color:#3c3c3c;transform:scaleX(1.0745);">$P{context}.translate</span>
<span class="t" style="left:376.7px;top:124.02px;font-size:7.2px;line-height:9px;height:9px;color:#3c3c3c;transform:scaleX(1.0685);">$P{context}.translate</span>
<span class="t" style="left:192.3px;top:124.02px;font-size:7.2px;line-height:9px;height:9px;color:#3c3c3c;transform:scaleX(1.1263);">&quot; + &quot;</span>
<div style="left:25px;top:134px;width:444.5px;height:1.5px;background:#3a3a3a;"></div>
<svg style="left:25px;top:137px;" width="445" height="4.5" viewBox="0 0 445 4.5"><path d="M0 .8 H445 M0 3.3 H445" stroke="#404040" stroke-width=".95" stroke-dasharray="4.9 1.07"/></svg>
<div style="left:48px;top:141px;width:316px;height:14px;border:1px solid #d9d9d9;box-sizing:border-box;"></div>
<div style="left:363px;top:141px;width:107px;height:14px;border:1px solid #d9d9d9;box-sizing:border-box;"></div>
<span class="t" style="left:114.5px;top:142.63px;font-size:8.6px;line-height:10px;height:10px;color:#161616;font-weight:bold;transform:scaleX(1.1251);">$P{context}.translate(&quot;Total_borrowings_price&quot;) + &quot;: &quot;</span>
<span class="t" style="left:364.3px;top:142.63px;font-size:8.6px;line-height:10px;height:10px;color:#161616;font-weight:bold;transform:scaleX(1.1756);">$P{context}.</span>
<div style="left:48px;top:154px;width:316px;height:13px;border:1px solid #d9d9d9;box-sizing:border-box;"></div>
<div style="left:363px;top:154px;width:107px;height:13px;border:1px solid #d9d9d9;box-sizing:border-box;"></div>
<span class="t" style="left:119.9px;top:155.43px;font-size:8.6px;line-height:10px;height:10px;color:#161616;font-weight:bold;transform:scaleX(1.1274);">$P{context}.translate(&quot;Total_reminders_price&quot;) + &quot;: &quot;</span>
<span class="t" style="left:364.3px;top:155.43px;font-size:8.6px;line-height:10px;height:10px;color:#161616;font-weight:bold;transform:scaleX(1.1756);">$P{context}.</span>
<div style="left:48px;top:166px;width:316px;height:14px;border:1px solid #d9d9d9;box-sizing:border-box;"></div>
<div style="left:363px;top:166px;width:107px;height:14px;border:1px solid #d9d9d9;box-sizing:border-box;"></div>
<span class="t" style="left:108.2px;top:168.13px;font-size:8.6px;line-height:10px;height:10px;color:#161616;font-weight:bold;transform:scaleX(1.1220);">$P{context}.translate(&quot;Total_handling_fee_price&quot;) + &quot;: &quot;</span>
<span class="t" style="left:364.3px;top:168.13px;font-size:8.6px;line-height:10px;height:10px;color:#161616;font-weight:bold;transform:scaleX(1.1756);">$P{context}.</span>
<div style="left:48px;top:181px;width:316px;height:15px;border:1px solid #d9d9d9;box-sizing:border-box;"></div>
<div style="left:363px;top:181px;width:107px;height:15px;border:1px solid #d9d9d9;box-sizing:border-box;"></div>
<span class="t" style="left:196.3px;top:182.43px;font-size:8.6px;line-height:10px;height:10px;color:#161616;font-weight:bold;transform:scaleX(1.1585);">$P{context}.translate(&quot;Total&quot;) + &quot;: &quot;</span>
<span class="t" style="left:364.3px;top:182.43px;font-size:8.6px;line-height:10px;height:10px;color:#161616;font-weight:bold;transform:scaleX(1.1756);">$P{context}.</span>
<div style="left:48px;top:195px;width:316px;height:13px;border:1px solid #d9d9d9;box-sizing:border-box;"></div>
<div style="left:363px;top:195px;width:107px;height:13px;border:1px solid #d9d9d9;box-sizing:border-box;"></div>
<span class="t" style="left:112.3px;top:195.13px;font-size:8.6px;line-height:10px;height:10px;color:#161616;font-weight:bold;transform:scaleX(1.1206);">$P{context}.translate(&quot;Total_borrowings_count&quot;) + &quot;: &quot;</span>
<span class="t" style="left:364.3px;top:195.13px;font-size:8.6px;line-height:10px;height:10px;color:#161616;font-weight:bold;transform:scaleX(1.0267);">$V</span>
<div style="left:48px;top:207px;width:316px;height:13px;border:1px solid #d9d9d9;box-sizing:border-box;"></div>
<div style="left:363px;top:207px;width:107px;height:13px;border:1px solid #d9d9d9;box-sizing:border-box;"></div>
<span class="t" style="left:128px;top:207.93px;font-size:8.6px;line-height:10px;height:10px;color:#161616;font-weight:bold;transform:scaleX(1.1300);">$P{context}.translate(&quot;Total_readers_count&quot;) + &quot;: &quot;</span>
<span class="t" style="left:364.3px;top:207.93px;font-size:8.6px;line-height:10px;height:10px;color:#161616;font-weight:bold;transform:scaleX(1.0267);">$V</span>
<div style="left:25px;top:179.2px;width:444.5px;height:1.6px;background:#3a3a3a;"></div>
</div>
<div style="left:1438px;top:123px;width:1px;height:814px;background:#9a9a9a;"></div>
<div style="left:1439px;top:123px;width:101.2px;height:814px;background:#fff;"></div>
<div style="left:1439px;top:123px;width:99px;height:21.5px;background:linear-gradient(#ffffff,#eceef7);"></div>
<div style="left:1439px;top:144.2px;width:99px;height:1.5px;background:#9a9a9a;"></div>
<svg style="left:1442px;top:128.5px;" width="11" height="11" viewBox="0 0 11 11"><circle cx="5.5" cy="5.5" r="5.2" fill="#f6f1e4" stroke="#cfc5a8" stroke-width=".7"/><circle cx="3.2" cy="3.6" r="1.3" fill="#e8a020"/><circle cx="6.4" cy="2.6" r="1.3" fill="#3aa83a"/><circle cx="8.4" cy="5.3" r="1.3" fill="#d83030"/><circle cx="3.2" cy="7" r="1.3" fill="#d050b0"/><circle cx="6.4" cy="8.4" r="1.3" fill="#3060d0"/></svg>
<span class="t" style="left:1456.3px;top:127.17px;font-size:12px;line-height:14px;height:14px;color:#000;transform:scaleX(0.9422);">Palette</span>
<svg style="left:1524.5px;top:130.3px;" width="6" height="8.5" viewBox="0 0 6 8.5"><path d="M.6 .6 L5 4.2 .6 7.8z" fill="#fff" stroke="#8c8c8c" stroke-width=".9"/></svg>
<div style="left:1439px;top:146px;width:99px;height:20px;background:#f0f1f8;"></div>
<svg style="left:1440px;top:150.5px;" width="13" height="11" viewBox="0 0 13 11"><rect x=".6" y=".6" width="11.6" height="9.6" rx="1.5" fill="#fff" stroke="#444" stroke-width="1" stroke-dasharray="1.2 1.1"/></svg>
<span class="t" style="left:1455.7px;top:149.47px;font-size:12px;line-height:14px;height:14px;color:#000;transform:scaleX(0.8997);">Basic Elem...</span>
<svg style="left:1528px;top:153px;" width="9" height="6" viewBox="0 0 9 6"><path d="M.5 3 l2 -2 v4z" fill="#fff" stroke="#8a8a8a" stroke-width=".7"/><ellipse cx="5.8" cy="3" rx="2.4" ry="1.9" fill="#fff" stroke="#8a8a8a" stroke-width=".8"/></svg>
<svg style="left:1451.5px;top:170px;" width="12" height="13" viewBox="0 0 12 13"><path d="M.8 2.5 l9.5 -.8 .9 9 -9.8 1.2z" fill="#d2c84a" stroke="#a89a2a" stroke-width=".8" stroke-dasharray="2.2 .6"/><rect x="5" y="0" width="2.4" height="3.6" fill="#b0a838" stroke="#80781a" stroke-width=".5"/></svg>
<span class="t" style="left:1466.5px;top:171.37px;font-size:12px;line-height:14px;height:14px;color:#000;transform:scaleX(1.0139);">Note</span>
<svg style="left:1451.5px;top:191.3px;" width="12" height="12" viewBox="0 0 12 12"><rect x=".5" y="2.5" width="11" height="9" fill="#fff" stroke="#c2c2c2" stroke-width=".9"/><path d="M1.5 .5 h3 M3 .5 v6 M1.5 6.5 h3" stroke="#777" stroke-width=".8" fill="none"/></svg>
<span class="t" style="left:1466.5px;top:192.67px;font-size:12px;line-height:14px;height:14px;color:#000;transform:scaleX(0.9678);">Text Field</span>
<span class="t" style="left:1451.2px;top:216.56px;font-size:6.2px;line-height:7px;height:7px;color:#333;font-weight:bold;transform:scaleX(0.8351);">label</span>
<span class="t" style="left:1466.5px;top:214.87px;font-size:12px;line-height:14px;height:14px;color:#000;transform:scaleX(0.9775);">Static Text</span>
<svg style="left:1451.5px;top:235.8px;" width="12" height="10" viewBox="0 0 12 10"><rect x=".5" y=".5" width="11" height="9" fill="#fff" stroke="#9aa8b8" stroke-width=".9"/><rect x="1.6" y="1.6" width="8.8" height="6.8" fill="#7fb0e0"/><path d="M1.6 5.4 c2 -1.4 4 -.6 8.8 1.6 v1.4 h-8.8z" fill="#2f5f3a"/><path d="M1.6 1.6 h8.8 v2 h-8.8z" fill="#d4e6f8"/></svg>
<span class="t" style="left:1466.5px;top:236.17px;font-size:12px;line-height:14px;height:14px;color:#000;transform:scaleX(0.9894);">Image</span>
<svg style="left:1451.5px;top:256.3px;" width="11" height="13" viewBox="0 0 11 13"><path d="M1.5 0 v4.5 h8 v-4.5" fill="#fff" stroke="#cfd6d6" stroke-width=".9"/><path d="M1.5 12.5 v-5 h8 v5z" fill="#f2f7f6" stroke="#cfd6d6" stroke-width=".9"/><path d="M6.5 9 l2 1.5" stroke="#9ab" stroke-width=".7"/></svg>
<span class="t" style="left:1466.5px;top:257.67px;font-size:12px;line-height:14px;height:14px;color:#000;transform:scaleX(0.9379);">Break</span>
<svg style="left:1451.5px;top:277.7px;" width="13" height="12" viewBox="0 0 13 12"><rect x="1.5" y="1.5" width="10" height="9" fill="#d9e6f6" stroke="#8aa6d0" stroke-width=".9"/><circle cx="1.5" cy="1.5" r="1" fill="#8aa6d0"/><circle cx="11.5" cy="1.5" r="1" fill="#8aa6d0"/><circle cx="1.5" cy="10.5" r="1" fill="#8aa6d0"/><circle cx="11.5" cy="10.5" r="1" fill="#8aa6d0"/></svg>
<span class="t" style="left:1466.5px;top:279.07px;font-size:12px;line-height:14px;height:14px;color:#000;transform:scaleX(0.9660);">Rectangle</span>
<svg style="left:1451.5px;top:299.4px;" width="13" height="12" viewBox="0 0 13 12"><ellipse cx="6.5" cy="6" rx="5.6" ry="4.8" fill="#d9e6f6" stroke="#9ab4d8" stroke-width=".9"/><circle cx="1" cy="6" r=".9" fill="#9ab4d8"/><circle cx="12" cy="6" r=".9" fill="#9ab4d8"/><circle cx="6.5" cy="1.2" r=".9" fill="#9ab4d8"/><circle cx="6.5" cy="10.8" r=".9" fill="#9ab4d8"/></svg>
<span class="t" style="left:1466.5px;top:300.77px;font-size:12px;line-height:14px;height:14px;color:#000;transform:scaleX(0.9618);">Ellipse</span>
<svg style="left:1451.5px;top:321.2px;" width="13" height="12" viewBox="0 0 13 12"><path d="M1 1 L11.5 10.5" stroke="#8aa6d0" stroke-width="1"/><circle cx="1.2" cy="1.2" r="1" fill="#8aa6d0"/><circle cx="11.4" cy="10.4" r="1.2" fill="#8aa6d0"/></svg>
<span class="t" style="left:1466.5px;top:322.57px;font-size:12px;line-height:14px;height:14px;color:#000;transform:scaleX(0.9344);">Line</span>
<svg style="left:1451.5px;top:342.5px;" width="12" height="13" viewBox="0 0 12 13"><path d="M3 3 c0 -2 3 -2 3 0 c1 -1 3 -1 3 0 c2 0 2 2 1 3 c1 1 1 3 -1 3 c0 2 -3 2 -3 0 c-1 1 -3 1 -3 -.5 c-2 .3 -3 -2 -1.5 -2.8 c-1 -1.2 0 -3 1.5 -2.7z" fill="#c050c8" stroke="#8a2a98" stroke-width=".7"/><circle cx="1" cy="6" r="1.1" fill="#c050c8"/></svg>
<span class="t" style="left:1466.5px;top:343.87px;font-size:12px;line-height:14px;height:14px;color:#000;transform:scaleX(0.9472);">Generic</span>
<svg style="left:1451.5px;top:364.1px;" width="12" height="12" viewBox="0 0 12 12"><rect x=".5" y=".5" width="10.5" height="10" fill="#fcfcfc" stroke="#cfcfcf" stroke-width=".9"/><path d="M.5 10.5 h10.5" stroke="#b8b8b8" stroke-width="1"/></svg>
<span class="t" style="left:1466.5px;top:365.47px;font-size:12px;line-height:14px;height:14px;color:#000;transform:scaleX(0.9432);">Frame</span>
<svg style="left:1451.5px;top:385.8px;" width="12" height="13" viewBox="0 0 12 13"><rect x="2.5" y="1.5" width="9" height="10.5" fill="#eef3f2" stroke="#a9b5b5" stroke-width=".9"/><rect x="2.5" y="1.5" width="9" height="2.4" fill="#d8a050"/><path d="M4 6 h6 M4 8 h6 M4 10 h4" stroke="#b9c6c6" stroke-width=".7"/><path d="M0 7.5 h4 M2.6 5.8 l1.6 1.7 -1.6 1.7" stroke="#889" stroke-width=".8" fill="none"/></svg>
<span class="t" style="left:1466.5px;top:387.17px;font-size:12px;line-height:14px;height:14px;color:#000;">Subreport</span>
<svg style="left:1451.5px;top:408.5px;" width="12" height="10" viewBox="0 0 12 10"><path d="M.7 0 v9 M2.4 0 v9 M3.7 0 v9 M5.6 0 v9 M7 0 v9 M8.8 0 v9 M10.6 0 v9" stroke="#333" stroke-width="1"/><path d="M2.4 0 v9 M8.8 0 v9" stroke="#333" stroke-width="1.5"/></svg>
<span class="t" style="left:1466.5px;top:408.87px;font-size:12px;line-height:14px;height:14px;color:#000;transform:scaleX(0.9799);">Barcode</span>
<svg style="left:1451.5px;top:431px;" width="12" height="10" viewBox="0 0 12 10"><rect x="0" y=".2" width="2" height="2" fill="#333"/><rect x="0" y="4" width="2" height="2" fill="#333"/><rect x="0" y="7.8" width="2" height="2" fill="#333"/><path d="M3.8 1.2 h7.7 M3.8 5 h7.7 M3.8 8.8 h7.7" stroke="#333" stroke-width="1.1"/></svg>
<span class="t" style="left:1466.5px;top:430.37px;font-size:12px;line-height:14px;height:14px;color:#000;transform:scaleX(0.9264);">List</span>
<svg style="left:1451.5px;top:450.7px;" width="12" height="12" viewBox="0 0 12 12"><circle cx="6" cy="6" r="5.6" fill="#e03030"/><path d="M6 6 V.4 A5.6 5.6 0 0 1 11.6 6z" fill="#3aa03a"/><path d="M6 6 H11.6 A5.6 5.6 0 0 1 3 10.7z" fill="#2a8ad8"/></svg>
<span class="t" style="left:1466.5px;top:452.07px;font-size:12px;line-height:14px;height:14px;color:#000;transform:scaleX(0.9542);">Chart</span>
<svg style="left:1451.5px;top:472.4px;" width="12" height="12" viewBox="0 0 12 12"><rect x=".5" y=".5" width="11" height="10.5" fill="#fff" stroke="#5a8ad0" stroke-width=".9"/><rect x="1" y="1" width="10" height="2.6" fill="#4a8ae0"/><rect x="1" y="1" width="2.8" height="9.5" fill="#4a8ae0"/><path d="M3.8 6 h7 M7 3.6 v7" stroke="#c8d4e8" stroke-width=".7"/></svg>
<span class="t" style="left:1466.5px;top:473.77px;font-size:12px;line-height:14px;height:14px;color:#000;transform:scaleX(0.9496);">Crosstab</span>
<svg style="left:1451.5px;top:493.8px;" width="12" height="12" viewBox="0 0 12 12"><rect x=".5" y=".5" width="11" height="10.5" fill="#fff" stroke="#c0a0a0" stroke-width=".9"/><rect x="1" y="1" width="10" height="2.8" fill="#e04040"/><path d="M1 6 h10 M1 8.3 h10 M4.3 3.8 v7 M7.6 3.8 v7" stroke="#d8d8d8" stroke-width=".7"/></svg>
<span class="t" style="left:1466.5px;top:495.17px;font-size:12px;line-height:14px;height:14px;color:#000;transform:scaleX(0.9760);">Table</span>
<svg style="left:1451.5px;top:515.2px;" width="12" height="12" viewBox="0 0 12 12"><rect x=".5" y=".5" width="11" height="10.5" fill="#cfe6b0" stroke="#9ab08a" stroke-width=".9"/><path d="M1 8 l3 -4 2 3 2 -2 3 4 v1.5 h-10z" fill="#5aa04a"/><path d="M1 1 h4 v3 l-4 3z" fill="#8ac0e8"/></svg>
<span class="t" style="left:1466.5px;top:516.57px;font-size:12px;line-height:14px;height:14px;color:#000;transform:scaleX(1.0195);">Map</span>
<svg style="left:1451.5px;top:537px;" width="13" height="12" viewBox="0 0 13 12"><path d="M6.5 .6 L12.2 4.4 10 10.8 H3 L.8 4.4z" fill="#e8e0ec" stroke="#6a5a7a" stroke-width=".8"/><path d="M6.5 .6 V10.8 M.8 4.4 L10 10.8 M12.2 4.4 L3 10.8 M.8 4.4 H12.2" stroke="#8a7a9a" stroke-width=".5"/><path d="M6.5 3 L10 5 8.5 9 4 8.5 3 5z" fill="#b88ac8" opacity=".7"/></svg>
<span class="t" style="left:1466.5px;top:538.37px;font-size:12px;line-height:14px;height:14px;color:#000;transform:scaleX(0.9738);">Spider Chart</span>
<svg style="left:1451.5px;top:558.7px;" width="12" height="12" viewBox="0 0 12 12"><path d="M1 4 h3 v-3 h3 v3 h3 v3 h-3 v3 h-3 v-3 h-3z" fill="#d8a020"/><circle cx="3" cy="3" r="2.2" fill="#d83a2a"/><circle cx="9" cy="3" r="2.2" fill="#2a6ad8"/><circle cx="3.5" cy="8.5" r="2.2" fill="#3aa03a"/><circle cx="8.5" cy="8.5" r="2" fill="#e0b020"/></svg>
<span class="t" style="left:1466.5px;top:560.07px;font-size:12px;line-height:14px;height:14px;color:#000;transform:scaleX(0.9626);">Custom</span>
<span class="t" style="left:1466.5px;top:575.97px;font-size:12px;line-height:14px;height:14px;color:#000;">Visualization</span>
<div style="left:1439px;top:595.5px;width:99px;height:1.3px;background:#a9a9a9;"></div>
<div style="left:1439px;top:597px;width:99px;height:20px;background:#f0f1f8;"></div>
<svg style="left:1440px;top:602px;" width="13" height="8" viewBox="0 0 13 8"><rect x=".5" y=".5" width="12" height="6.5" fill="#fff" stroke="#a8a8a8" stroke-width=".9"/><path d="M2 2.6 h3 M2.8 1.6 v2.2 M4.2 1.6 v2.2" stroke="#444" stroke-width=".6"/></svg>
<span class="t" style="left:1455.2px;top:599.97px;font-size:12px;line-height:14px;height:14px;color:#000;transform:scaleX(0.9679);">Composite...</span>
<svg style="left:1528px;top:603.5px;" width="9" height="6" viewBox="0 0 9 6"><path d="M.5 3 l2 -2 v4z" fill="#fff" stroke="#8a8a8a" stroke-width=".7"/><ellipse cx="5.8" cy="3" rx="2.4" ry="1.9" fill="#fff" stroke="#8a8a8a" stroke-width=".8"/></svg>
<svg style="left:1451.5px;top:620.4px;" width="12" height="11" viewBox="0 0 12 11"><rect x=".5" y=".5" width="11" height="10" fill="#fafafa" stroke="#bdbdbd" stroke-width=".9"/></svg>
<span class="t" style="left:1455.2753125px;top:621.92px;font-size:8px;line-height:9px;height:9px;color:#222;font-weight:bold;">#</span>
<span class="t" style="left:1466.5px;top:621.77px;font-size:12px;line-height:14px;height:14px;color:#000;transform:scaleX(0.9206);">Page</span>
<span class="t" style="left:1466.5px;top:637.67px;font-size:12px;line-height:14px;height:14px;color:#000;transform:scaleX(1.0122);">Number</span>
<svg style="left:1451.5px;top:657.7px;" width="12" height="11" viewBox="0 0 12 11"><rect x=".5" y=".5" width="11" height="10" fill="#fafafa" stroke="#bdbdbd" stroke-width=".9"/></svg>
<span class="t" style="left:1455.09953125px;top:659.22px;font-size:8px;line-height:9px;height:9px;color:#222;font-weight:bold;">Σ</span>
<span class="t" style="left:1466.5px;top:659.07px;font-size:12px;line-height:14px;height:14px;color:#000;transform:scaleX(0.9568);">Total Pages</span>
<svg style="left:1451.5px;top:679.5px;" width="12" height="12" viewBox="0 0 12 12"><rect x=".5" y="1.5" width="11" height="10" fill="#fff" stroke="#b08a8a" stroke-width=".9"/><rect x=".5" y="1.5" width="11" height="3" fill="#d83030"/><path d="M3 0 v3 M9 0 v3" stroke="#7a2a2a" stroke-width="1"/><text x="2" y="10.4" font-size="5.6" font-weight="bold" fill="#333" font-family="Liberation Sans">31</text></svg>
<span class="t" style="left:1466.5px;top:680.87px;font-size:12px;line-height:14px;height:14px;color:#000;transform:scaleX(0.9797);">Current Date</span>
<svg style="left:1451.5px;top:700.9px;" width="12" height="12" viewBox="0 0 12 12"><rect x=".5" y="1.5" width="11" height="10" fill="#fff" stroke="#b08a8a" stroke-width=".9"/><rect x=".5" y="1.5" width="11" height="3" fill="#d83030"/><path d="M3 0 v3 M9 0 v3" stroke="#7a2a2a" stroke-width="1"/><text x="2" y="10.4" font-size="5.6" font-weight="bold" fill="#333" font-family="Liberation Sans">31</text></svg>
<span class="t" style="left:1466.5px;top:702.27px;font-size:12px;line-height:14px;height:14px;color:#000;transform:scaleX(0.9839);">Time</span>
<svg style="left:1451.5px;top:722.6px;" width="12" height="11" viewBox="0 0 12 11"><rect x=".5" y=".5" width="11" height="10" fill="#fafafa" stroke="#bdbdbd" stroke-width=".9"/></svg>
<span class="t" style="left:1454.165576171875px;top:723.93px;font-size:7.5px;line-height:9px;height:9px;color:#222;font-weight:bold;">%</span>
<span class="t" style="left:1466.5px;top:723.97px;font-size:12px;line-height:14px;height:14px;color:#000;transform:scaleX(0.9498);">Percentage</span>
<svg style="left:1451.5px;top:745.3px;" width="13" height="9" viewBox="0 0 13 9"><rect x=".5" y=".5" width="12" height="8" fill="#e8e8e8" stroke="#b5b5b5" stroke-width=".9"/></svg>
<span class="t" style="left:1452.7px;top:747.09px;font-size:6px;line-height:6px;height:6px;color:#333;font-weight:bold;transform:scaleX(1.2708);">#/#</span>
<span class="t" style="left:1466.5px;top:745.67px;font-size:12px;line-height:14px;height:14px;color:#000;transform:scaleX(0.9463);">Page X of Y</span>
<div style="left:1544.5px;top:70px;width:375.5px;height:887.5px;background:#fff;border-radius:6px 0 0 3px;"></div>
<div style="left:1544.5px;top:70px;width:375.5px;height:24px;background:#f4f5fb;border-radius:6px 0 0 0;"></div>
<div style="left:1544.5px;top:70px;width:93.5px;height:24px;background:linear-gradient(#e9eff7 0%,#f0f4fa 60%,#f4f5fb 100%);border-radius:6px 6px 0 0;"></div>
<svg style="left:1549px;top:78px;" width="11.5" height="9.4" viewBox="0 0 11.5 9.4"><rect x=".5" y=".5" width="10.5" height="8.4" fill="#fff" stroke="#5c6c9c" stroke-width="1"/><rect x="1" y="1" width="9.5" height="1.8" fill="#b8c4e0"/><path d="M.5 3 h10.5 M3.8 3 v6" stroke="#6a7aa8" stroke-width=".8"/><path d="M3.8 5.8 h7" stroke="#c8cee0" stroke-width=".6"/></svg>
<span class="t" style="left:1563.8px;top:76.27px;font-size:12px;line-height:14px;height:14px;color:#000;transform:scaleX(0.9727);">Properties</span>
<svg style="left:1624px;top:78.5px;" width="9" height="9" viewBox="0 0 9 9"><path d="M1.4 1.4 L7.6 7.6 M7.6 1.4 L1.4 7.6" stroke="#6f6f6f" stroke-width="2.7" stroke-linecap="square"/><path d="M1.4 1.4 L7.6 7.6 M7.6 1.4 L1.4 7.6" stroke="#fff" stroke-width="1.1" stroke-linecap="square"/></svg>
<svg style="left:1843px;top:75px;" width="13" height="11" viewBox="0 0 13 11"><rect x=".5" y="2.5" width="10" height="8" fill="#fff" stroke="#7a8fb0" stroke-width=".9"/><rect x=".5" y="2.5" width="10" height="2" fill="#9ab6dc"/><path d="M8 4 l3 -3.5 1.5 1.2 -3 3.5z" fill="#2fa050"/><path d="M7.5 5.5 l.6 -1.6 1 .8z" fill="#555"/></svg>
<svg style="left:1869px;top:76.3px;" width="8" height="5" viewBox="0 0 8 5"><path d="M.6 .5 h6.8 l-3.4 3.6z" fill="#fff" stroke="#6a6a6a" stroke-width=".9"/></svg>
<svg style="left:1885px;top:76.2px;" width="9" height="3.2" viewBox="0 0 9 3.2"><rect x=".5" y=".5" width="8" height="2.2" fill="#fff" stroke="#6a6a6a" stroke-width="1"/></svg>
<svg style="left:1903px;top:75.8px;" width="9" height="8.6" viewBox="0 0 9 8.6"><rect x=".5" y=".5" width="8" height="7.6" fill="#fff" stroke="#6a6a6a" stroke-width="1"/><rect x="0" y="0" width="9" height="2" fill="#6a6a6a"/></svg>
<div style="left:1546px;top:94.5px;width:178px;height:27px;background:linear-gradient(#ffffff 0%,#f8f9fd 25%,#eceff8 65%,#e3e8f5 100%);"></div>
<div style="left:1546px;top:121px;width:178px;height:1px;background:#c3cee6;"></div>
<svg style="left:1556px;top:102.7px;" width="12" height="10" viewBox="0 0 12 10"><rect x="0" y=".2" width="2" height="2" fill="#333"/><rect x="0" y="4" width="2" height="2" fill="#333"/><rect x="0" y="7.8" width="2" height="2" fill="#333"/><path d="M3.8 1.2 h7.7 M3.8 5 h7.7 M3.8 8.8 h7.7" stroke="#333" stroke-width="1.1"/></svg>
<span class="t" style="left:1572.6px;top:100.65px;font-size:14.4px;line-height:16px;height:16px;color:#1575d6;font-weight:bold;transform:scaleX(0.8967);">List: List</span>
<div style="left:1725px;top:99px;width:195px;height:18px;background:#fff;border:1px solid #a8a8a8;box-sizing:border-box;"></div>
<div style="left:1906.5px;top:100px;width:12.5px;height:16px;background:#f7f7f7;"></div>
<span class="t" style="left:1729.5px;top:102.77px;font-size:12px;line-height:14px;height:14px;color:#2a7bd6;transform:scaleX(0.9618);">Search Property</span>
<svg style="left:1909.5px;top:106.3px;" width="5" height="3" viewBox="0 0 5 3"><path d="M0 0 h5 l-2.5 3z" fill="#111"/></svg>
<div style="left:1550px;top:128px;width:1px;height:1px;background:#b0b0b0;"></div>
<div style="left:1550px;top:131px;width:1px;height:1px;background:#b0b0b0;"></div>
<div style="left:1550px;top:134px;width:1px;height:1px;background:#b0b0b0;"></div>
<div style="left:1550px;top:137px;width:1px;height:1px;background:#b0b0b0;"></div>
<div style="left:1550px;top:140px;width:1px;height:1px;background:#b0b0b0;"></div>
<div style="left:1550px;top:143px;width:1px;height:1px;background:#b0b0b0;"></div>
<div style="left:1550px;top:146px;width:1px;height:1px;background:#b0b0b0;"></div>
<div style="left:1555px;top:126.2px;width:88.6px;height:19.8px;background:#cce4f7;border:1px solid #a8d3f5;box-sizing:border-box;"></div>
<svg style="left:1558px;top:131px;" width="13" height="12" viewBox="0 0 13 12"><path d="M2.5 1 v10.5 h2.2 v-6.5 h7.5 v-2.4 h-7.5 v-1.6z" fill="#f6cc9a" stroke="#c98c50" stroke-width=".8"/></svg>
<span class="t" style="left:1574.7px;top:130.57px;font-size:12px;line-height:14px;height:14px;color:#000;transform:scaleX(0.9812);">Appearance</span>
<svg style="left:1646.5px;top:131px;" width="13" height="12" viewBox="0 0 13 12"><rect x=".5" y=".5" width="12" height="11" rx="1" fill="#fdfdfd" stroke="#b9b9b9" stroke-width=".9"/><rect x="1" y="3.2" width="11" height="2.4" fill="#555"/><path d="M1 8.4 h11" stroke="#c2c2c2" stroke-width=".9"/><path d="M1 6.4 h11" stroke="#e6e6e6" stroke-width="1"/></svg>
<span class="t" style="left:1663px;top:130.57px;font-size:12px;line-height:14px;height:14px;color:#000;transform:scaleX(0.9696);">Dataset</span>
<svg style="left:1712.5px;top:132px;" width="12" height="10" viewBox="0 0 12 10"><rect x="0" y=".2" width="2" height="2" fill="#333"/><rect x="0" y="4" width="2" height="2" fill="#333"/><rect x="0" y="7.8" width="2" height="2" fill="#333"/><path d="M3.8 1.2 h7.7 M3.8 5 h7.7 M3.8 8.8 h7.7" stroke="#333" stroke-width="1.1"/></svg>
<span class="t" style="left:1728.1px;top:130.57px;font-size:12px;line-height:14px;height:14px;color:#000;transform:scaleX(0.9264);">List</span>
<svg style="left:1755px;top:131.5px;" width="12" height="11" viewBox="0 0 12 11"><rect x=".5" y=".5" width="11" height="10" fill="#eef1f6" stroke="#6a7a9a" stroke-width=".9"/><rect x=".5" y=".5" width="11" height="2.4" fill="#8a9ab8"/><path d="M.5 5.5 h11 M.5 8 h11 M4 3 v7.5 M8 3 v7.5" stroke="#b8c2d6" stroke-width=".6"/></svg>
<span class="t" style="left:1770.6px;top:130.57px;font-size:12px;line-height:14px;height:14px;color:#000;transform:scaleX(0.9780);">Advanced</span>
<div style="left:1546px;top:151px;width:374px;height:1px;background:#a6a6a6;"></div>
<span class="t" style="left:1551px;top:162.37px;font-size:12px;line-height:14px;height:14px;color:#000;font-weight:bold;transform:scaleX(0.9559);">Layout</span>
<div style="left:1550.5px;top:179px;width:362.5px;height:1.2px;background:#a2a2a2;"></div>
<span class="t" style="left:1553px;top:189.17px;font-size:12px;line-height:14px;height:14px;color:#000;transform:scaleX(0.9422);">Layouts</span>
<div style="left:1603px;top:187.5px;width:119.6px;height:15.7px;background:#fff;border:1px solid #767676;border-radius:2.5px;box-sizing:border-box;"></div>
<span class="t" style="left:1605.5px;top:189.57px;font-size:12px;line-height:14px;height:14px;color:#000;transform:scaleX(0.9447);">Free Layout</span>
<svg style="left:1713.6px;top:194px;" width="5" height="3.2" viewBox="0 0 5 3.2"><path d="M0 0 h5 l-2.5 3.2z" fill="#111"/></svg>
<svg style="left:1551px;top:220.5px;" width="7.4" height="7.4" viewBox="0 0 7.4 7.4"><rect x=".5" y=".5" width="6.4" height="6.4" fill="#fff" stroke="#9a9a9a" stroke-width=".9"/><path d="M1.9 3.7 h3.6000000000000005" stroke="#333" stroke-width=".9"/></svg>
<span class="t" style="left:1563.7px;top:217.17px;font-size:12px;line-height:14px;height:14px;color:#000;font-weight:bold;transform:scaleX(0.9420);">Location</span>
<div style="left:1550.5px;top:234px;width:362.5px;height:1.4px;background:#c9c9c9;"></div>
<span class="t" style="left:1618.8px;top:245.67px;font-size:12px;line-height:14px;height:14px;color:#000;transform:scaleX(0.9000);">x</span>
<div style="left:1630.3px;top:241px;width:75.40000000000009px;height:20.5px;background:#fff;border:1px solid #7a7a7a;box-sizing:border-box;"></div>
<span class="t" style="left:1636px;top:244.92px;font-size:12px;line-height:14px;height:14px;color:#000;transform:scaleX(0.9920);">0 px</span>
<span class="t" style="left:1712px;top:245.67px;font-size:12px;line-height:14px;height:14px;color:#000;transform:scaleX(0.9333);">y</span>
<div style="left:1724.2px;top:241px;width:74.79999999999995px;height:20.5px;background:#fff;border:1px solid #7a7a7a;box-sizing:border-box;"></div>
<span class="t" style="left:1730.1px;top:244.92px;font-size:12px;line-height:14px;height:14px;color:#000;transform:scaleX(0.9606);">16 px</span>
<span class="t" style="left:1554.5px;top:269.97px;font-size:12px;line-height:14px;height:14px;color:#000;transform:scaleX(0.9634);">Position Type</span>
<div style="left:1630.3px;top:266px;width:145.5px;height:21.30000000000001px;background:#e1e1e1;border:1px solid #adadad;box-sizing:border-box;"></div>
<span class="t" style="left:1633.7px;top:270.32px;font-size:12px;line-height:14px;height:14px;color:#000;transform:scaleX(0.9788);">Fix Relative To Top</span>
<svg style="left:1763.5px;top:274.5px;" width="8" height="5" viewBox="0 0 8 5"><path d="M.5 .6 L4 4.1 7.5 .6" fill="none" stroke="#444" stroke-width="1"/></svg>
<svg style="left:1551px;top:304.3px;" width="7.4" height="7.4" viewBox="0 0 7.4 7.4"><rect x=".5" y=".5" width="6.4" height="6.4" fill="#fff" stroke="#9a9a9a" stroke-width=".9"/><path d="M1.9 3.7 h3.6000000000000005" stroke="#333" stroke-width=".9"/></svg>
<span class="t" style="left:1563.7px;top:300.97px;font-size:12px;line-height:14px;height:14px;color:#000;font-weight:bold;transform:scaleX(0.8746);">Size</span>
<div style="left:1550.5px;top:318px;width:362.5px;height:1.4px;background:#c9c9c9;"></div>
<span class="t" style="left:1610.8px;top:329.87px;font-size:12px;line-height:14px;height:14px;color:#000;transform:scaleX(0.9462);">w</span>
<div style="left:1625.5px;top:325.3px;width:75.0px;height:20.30000000000001px;background:#fff;border:1px solid #7a7a7a;box-sizing:border-box;"></div>
<span class="t" style="left:1631.3px;top:329.12px;font-size:12px;line-height:14px;height:14px;color:#000;transform:scaleX(0.9631);">555 px</span>
<span class="t" style="left:1707.6px;top:329.17px;font-size:12px;line-height:14px;height:14px;color:#000;transform:scaleX(0.8690);">h</span>
<div style="left:1720.3px;top:325.3px;width:74.70000000000005px;height:20.30000000000001px;background:#fff;border:1px solid #7a7a7a;box-sizing:border-box;"></div>
<span class="t" style="left:1726px;top:329.12px;font-size:12px;line-height:14px;height:14px;color:#000;transform:scaleX(0.9606);">16 px</span>
<span class="t" style="left:1554.5px;top:354.37px;font-size:12px;line-height:14px;height:14px;color:#000;transform:scaleX(0.9605);">Stretch Type</span>
<div style="left:1625.5px;top:349.7px;width:231.29999999999995px;height:21.600000000000023px;background:#e1e1e1;border:1px solid #adadad;box-sizing:border-box;"></div>
<span class="t" style="left:1629.2px;top:354.17px;font-size:12px;line-height:14px;height:14px;color:#000;transform:scaleX(0.9790);">No Stretch</span>
<svg style="left:1844.5px;top:358.5px;" width="8" height="5" viewBox="0 0 8 5"><path d="M.5 .6 L4 4.1 7.5 .6" fill="none" stroke="#444" stroke-width="1"/></svg>
<svg style="left:1551px;top:388.3px;" width="7.4" height="7.4" viewBox="0 0 7.4 7.4"><rect x=".5" y=".5" width="6.4" height="6.4" fill="#fff" stroke="#9a9a9a" stroke-width=".9"/><path d="M1.9 3.7 h3.6000000000000005" stroke="#333" stroke-width=".9"/></svg>
<span class="t" style="left:1563.7px;top:384.97px;font-size:12px;line-height:14px;height:14px;color:#000;font-weight:bold;transform:scaleX(0.9224);">Color</span>
<div style="left:1550.5px;top:401.5px;width:362.5px;height:1.4px;background:#c9c9c9;"></div>
<span class="t" style="left:1554.2px;top:412.87px;font-size:12px;line-height:14px;height:14px;color:#000;transform:scaleX(0.9944);">Forecolor</span>
<div style="left:1613.6px;top:413px;width:13px;height:12.6px;background:#000;"></div>
<span class="t" style="left:1636.3px;top:412.87px;font-size:12px;line-height:14px;height:14px;color:#000;transform:scaleX(0.9774);">Backcolor</span>
<div style="left:1696.7px;top:413px;width:13px;height:12.6px;background:#fff;border:1px solid #333;box-sizing:border-box;"></div>
<div style="left:1551.8px;top:439.4px;width:12.6px;height:12.4px;background:#fff;border:1px solid #333;box-sizing:border-box;"></div>
<svg style="left:1553.8px;top:441.9px;" width="9" height="8" viewBox="0 0 9 8"><path d="M.8 3.6 L3.2 6.2 8 1" fill="none" stroke="#222" stroke-width="1.1"/></svg>
<span class="t" style="left:1568.4px;top:439.07px;font-size:12px;line-height:14px;height:14px;color:#000;transform:scaleX(0.9493);">Transparent</span>
<svg style="left:1551px;top:474.3px;" width="7.4" height="7.4" viewBox="0 0 7.4 7.4"><rect x=".5" y=".5" width="6.4" height="6.4" fill="#fff" stroke="#9a9a9a" stroke-width=".9"/><path d="M1.9 3.7 h3.6000000000000005" stroke="#333" stroke-width=".9"/></svg>
<span class="t" style="left:1563.7px;top:470.97px;font-size:12px;line-height:14px;height:14px;color:#000;font-weight:bold;transform:scaleX(0.9668);">Style and Print Details</span>
<div style="left:1550.5px;top:487.5px;width:362.5px;height:1.4px;background:#c9c9c9;"></div>
<span class="t" style="left:1554.2px;top:498.47px;font-size:12px;line-height:14px;height:14px;color:#000;transform:scaleX(0.9774);">Label</span>
<div style="left:1589.4px;top:494.6px;width:321.5999999999999px;height:20.0px;background:#fff;border:1px solid #7a7a7a;box-sizing:border-box;"></div>
<span class="t" style="left:1554.2px;top:523.67px;font-size:12px;line-height:14px;height:14px;color:#000;transform:scaleX(0.9189);">Key</span>
<div style="left:1589.4px;top:519.4px;width:321.5999999999999px;height:20.0px;background:#fff;border:1px solid #7a7a7a;box-sizing:border-box;"></div>
<span class="t" style="left:1554.2px;top:549.17px;font-size:12px;line-height:14px;height:14px;color:#000;transform:scaleX(0.9446);">Style</span>
<div style="left:1589.4px;top:544.3px;width:29.0px;height:21.700000000000045px;background:#fff;border:1px solid #adadad;box-sizing:border-box;"></div>
<svg style="left:1606px;top:553.0px;" width="8" height="5" viewBox="0 0 8 5"><path d="M.5 .6 L4 4.1 7.5 .6" fill="none" stroke="#444" stroke-width="1"/></svg>
<div style="left:1551.8px;top:573.3px;width:12.6px;height:12.4px;background:#fff;border:1px solid #333;box-sizing:border-box;"></div>
<svg style="left:1553.8px;top:575.8px;" width="9" height="8" viewBox="0 0 9 8"><path d="M.8 3.6 L3.2 6.2 8 1" fill="none" stroke="#222" stroke-width="1.1"/></svg>
<span class="t" style="left:1568.4px;top:572.37px;font-size:12px;line-height:14px;height:14px;color:#000;transform:scaleX(0.9615);">Print Repeated Values</span>
<div style="left:1551.8px;top:593px;width:12.6px;height:12.4px;background:#fff;border:1px solid #333;box-sizing:border-box;"></div>
<span class="t" style="left:1568.4px;top:592.07px;font-size:12px;line-height:14px;height:14px;color:#000;transform:scaleX(0.9629);">Remove Line When Blank</span>
<div style="left:1551.8px;top:612.8px;width:12.6px;height:12.4px;background:#fff;border:1px solid #333;box-sizing:border-box;"></div>
<span class="t" style="left:1568.4px;top:611.97px;font-size:12px;line-height:14px;height:14px;color:#000;transform:scaleX(0.9641);">Print In First Whole Band</span>
<svg style="left:1553.5px;top:635.75px;" width="6.5" height="6.5" viewBox="0 0 6.5 6.5"><rect x=".5" y=".5" width="5.5" height="5.5" fill="#fff" stroke="#9a9a9a" stroke-width=".9"/><path d="M1.9 3.25 h2.7" stroke="#333" stroke-width=".9"/></svg>
<span class="t" style="left:1565.3px;top:631.97px;font-size:12px;line-height:14px;height:14px;color:#000;font-weight:bold;transform:scaleX(0.9853);">Print When</span>
<div style="left:1553px;top:648.2px;width:360px;height:1.4px;background:#c9c9c9;"></div>
<div style="left:1553.5px;top:658px;width:12.6px;height:12.4px;background:#fff;border:1px solid #333;box-sizing:border-box;"></div>
<span class="t" style="left:1570.1px;top:657.87px;font-size:12px;line-height:14px;height:14px;color:#000;">Detail Overflows</span>
<span class="t" style="left:1556.3px;top:680.77px;font-size:12px;line-height:14px;height:14px;color:#000;transform:scaleX(0.9443);">Group Changes</span>
<div style="left:1679.1px;top:676px;width:26.300000000000182px;height:21.5px;background:#e1e1e1;border:1px solid #adadad;box-sizing:border-box;"></div>
<svg style="left:1692.5px;top:684.5px;" width="8" height="5" viewBox="0 0 8 5"><path d="M.5 .6 L4 4.1 7.5 .6" fill="none" stroke="#444" stroke-width="1"/></svg>
<span class="t" style="left:1556.3px;top:707.87px;font-size:12px;line-height:14px;height:14px;color:#000;transform:scaleX(0.9529);">Print When Expression</span>
<div style="left:1679.1px;top:702.6px;width:199.5px;height:22.399999999999977px;background:#fff;border:1px solid #7a7a7a;box-sizing:border-box;"></div>
<div style="left:1861px;top:703.6px;width:16.6px;height:20.4px;background:#f0f0f0;"></div>
<svg style="left:1865.5px;top:706.5px;" width="8" height="5" viewBox="0 0 8 5"><path d="M.6 4.3 L4 .9 7.4 4.3" fill="none" stroke="#9a9a9a" stroke-width="1"/></svg>
<svg style="left:1865.5px;top:716.5px;" width="8" height="5" viewBox="0 0 8 5"><path d="M.6 .7 L4 4.1 7.4 .7" fill="none" stroke="#9a9a9a" stroke-width="1"/></svg>
<div style="left:1883.8px;top:703.3px;width:21.0px;height:21.700000000000045px;background:#e1e1e1;border:1px solid #adadad;box-sizing:border-box;"></div>
<svg style="left:1887.5px;top:707.5px;" width="14" height="13" viewBox="0 0 14 13"><rect x=".5" y=".5" width="11" height="9" fill="#fff" stroke="#4a7ac8" stroke-width="1"/><rect x=".5" y=".5" width="11" height="2" fill="#6a9ae0"/><path d="M4 11 L11 5 l1.6 1.6 -7 6 -2 .4z" fill="#e8b040" stroke="#a87a1a" stroke-width=".5"/></svg>
<div style="left:1686px;top:731.3px;width:85.59999999999991px;height:21.700000000000045px;background:#e1e1e1;border:1px solid #adadad;box-sizing:border-box;"></div>
<span class="t" style="left:1690.5px;top:735.82px;font-size:12px;line-height:14px;height:14px;color:#000;transform:scaleX(0.9821);">Edit Properties</span>
<div style="left:222px;top:962px;width:1698px;height:177px;background:#fff;border-radius:6px 0 0 3px;"></div>
<div style="left:222px;top:962px;width:1698px;height:24px;background:#f4f5fb;border-radius:6px 0 0 0;"></div>
<div style="left:222px;top:962px;width:107px;height:24px;background:linear-gradient(#e6edf6 0%,#f1f5fa 55%,#ffffff 100%);border-radius:6px 6px 0 0;"></div>
<svg style="left:227.5px;top:968.8px;" width="12" height="13" viewBox="0 0 12 13"><g><path d="M1.5 .5 h6 l3 3 v8.5 h-9z" fill="#fbfcfd" stroke="#a9b2bd" stroke-width=".9"/><path d="M7.5 .5 v3 h3" fill="#e6ebf0" stroke="#a9b2bd" stroke-width=".7"/><path d="M2.3 10.8 l3.2 -3.8 2.3 2.3 1 -1 1.9 2.5z" fill="#c8202a"/><path d="M.5 12.2 h11" stroke="#7a7a7a" stroke-width="1.3"/></g></svg>
<span class="t" style="left:242.2px;top:969.17px;font-size:12px;line-height:14px;height:14px;color:#000;transform:scaleX(0.9766);">Report State</span>
<svg style="left:314px;top:971px;" width="9" height="9" viewBox="0 0 9 9"><path d="M1.4 1.4 L7.6 7.6 M7.6 1.4 L1.4 7.6" stroke="#6f6f6f" stroke-width="2.7" stroke-linecap="square"/><path d="M1.4 1.4 L7.6 7.6 M7.6 1.4 L1.4 7.6" stroke="#fff" stroke-width="1.1" stroke-linecap="square"/></svg>
<svg style="left:1885px;top:969.2px;" width="9" height="3.2" viewBox="0 0 9 3.2"><rect x=".5" y=".5" width="8" height="2.2" fill="#fff" stroke="#6a6a6a" stroke-width="1"/></svg>
<svg style="left:1903px;top:968.8px;" width="9" height="8.6" viewBox="0 0 9 8.6"><rect x=".5" y=".5" width="8" height="7.6" fill="#fff" stroke="#6a6a6a" stroke-width="1"/><rect x="0" y="0" width="9" height="2" fill="#6a6a6a"/></svg>
<span class="t" style="left:228.8px;top:993.97px;font-size:12px;line-height:14px;height:14px;color:#222;transform:scaleX(0.9585);">Console</span>
<span class="t" style="left:280.5px;top:993.97px;font-size:12px;line-height:14px;height:14px;color:#222;transform:scaleX(0.9092);">Errors</span>
<span class="t" style="left:319.3px;top:993.97px;font-size:12px;line-height:14px;height:14px;color:#222;transform:scaleX(0.9622);">Statistics</span>
<div style="left:225px;top:1014px;width:1695px;height:124px;background:#f0f0f0;border-top:1px solid #8f8f8f;border-left:1px solid #8f8f8f;border-bottom:1px solid #b5b5b5;box-sizing:border-box;"></div>
<div style="left:226px;top:1118.5px;width:1677px;height:1px;background:#fbfbfb;"></div>
<div style="left:1902.5px;top:1015px;width:1px;height:104px;background:#fbfbfb;"></div>
<svg style="left:1906px;top:1021px;" width="10" height="6" viewBox="0 0 10 6"><path d="M.8 5.2 L5 1 9.2 5.2" fill="none" stroke="#b9b9b9" stroke-width="1.2"/></svg>
<svg style="left:1906px;top:1107px;" width="10" height="6" viewBox="0 0 10 6"><path d="M.8 .8 L5 5 9.2 .8" fill="none" stroke="#b9b9b9" stroke-width="1.2"/></svg>
<svg style="left:231px;top:1123px;" width="6" height="10" viewBox="0 0 6 10"><path d="M5.2 .8 L1 5 5.2 9.2" fill="none" stroke="#b9b9b9" stroke-width="1.2"/></svg>
<svg style="left:1891px;top:1123px;" width="6" height="10" viewBox="0 0 6 10"><path d="M.8 .8 L5 5 .8 9.2" fill="none" stroke="#b9b9b9" stroke-width="1.2"/></svg>
<div style="left:4px;top:1139.5px;width:1916px;height:19.5px;background:#e1e6f6;"></div>
<div style="left:1639px;top:1144px;width:1px;height:1.4px;background:#9a9a9a;"></div>
<div style="left:1639px;top:1147px;width:1px;height:1.4px;background:#9a9a9a;"></div>
<div style="left:1639px;top:1150px;width:1px;height:1.4px;background:#9a9a9a;"></div>
<div style="left:1639px;top:1153px;width:1px;height:1.4px;background:#9a9a9a;"></div>
<div style="left:1639px;top:1156px;width:1px;height:1.4px;background:#9a9a9a;"></div>
<div style="left:0px;top:957.5px;width:3px;height:4.5px;background:#e1e6f6;"></div>
<div style="left:0px;top:962px;width:3px;height:24px;background:#f4f5fb;"></div>
<div style="left:0px;top:1014px;width:1px;height:118px;background:#8c8c8c;"></div>
<div style="left:3px;top:0px;width:1px;height:1159px;background:#d4d4d4;"></div>
<div style="left:4px;top:0px;width:1px;height:1159px;background:#cdd0d8;"></div>
</body></html>
